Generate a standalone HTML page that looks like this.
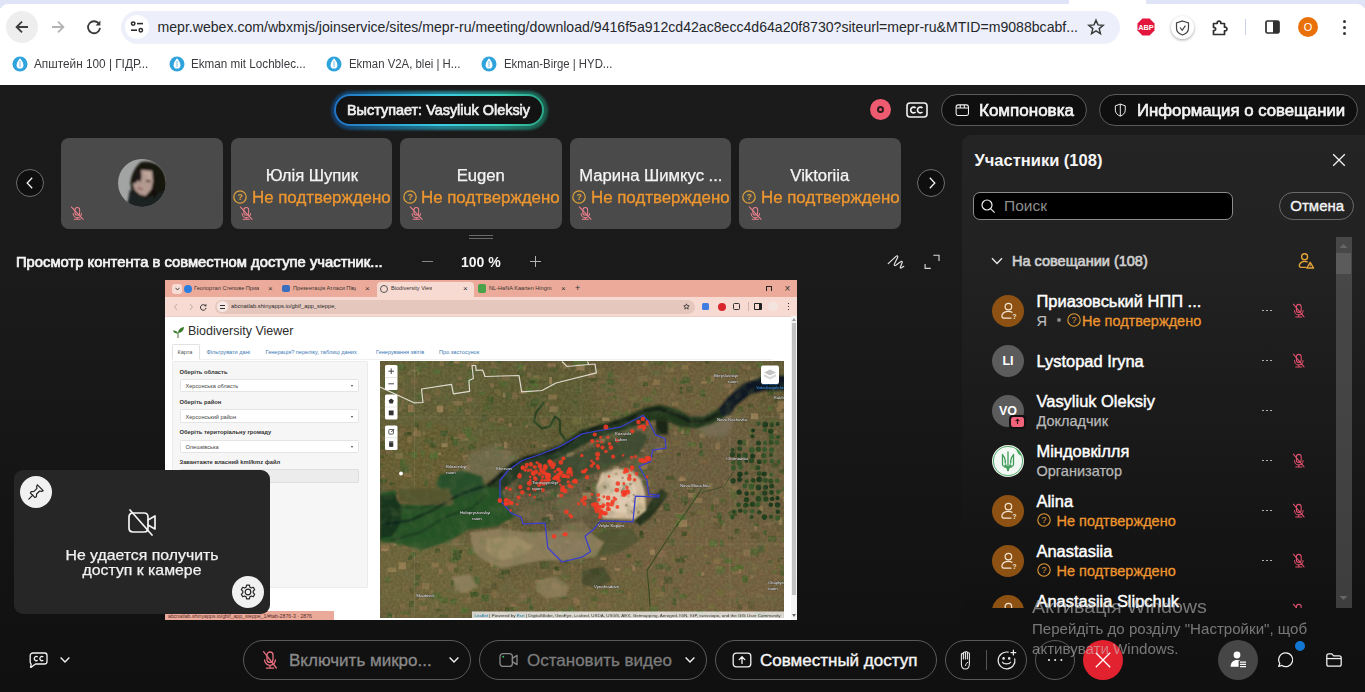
<!DOCTYPE html>
<html>
<head>
<meta charset="utf-8">
<title>Webex</title>
<style>
*{box-sizing:border-box;margin:0;padding:0}
html,body{width:1365px;height:692px;overflow:hidden;background:#111;font-family:"Liberation Sans",sans-serif;}
.abs{position:absolute}
#root{position:relative;width:1365px;height:692px;overflow:hidden;background:linear-gradient(180deg,#1b1b1b 85px,#1a1a1a 300px,#111 640px,#101010 692px)}
/* browser chrome */
#chrome{position:absolute;left:0;top:0;width:1365px;height:85px;background:#fff}
#tabstrip{position:absolute;left:0;top:0;width:1365px;height:8px;background:#dfe4f6}
#toolbar{position:absolute;left:0;top:4px;width:1365px;height:44px;background:#fff;border-radius:8px 8px 0 0}
#urlbar{position:absolute;left:120.500px;top:10.500px;width:999px;height:33px;border-radius:17px;background:#edf0fa}
#urltext{position:absolute;left:157.500px;top:18.500px;font-size:14.100px;color:#25272b;white-space:nowrap;letter-spacing:0px}
.bm{position:absolute;top:57px;font-size:12px;line-height:14px;color:#3a3c40;white-space:nowrap;transform-origin:0 50%}
/* webex */
.pill{position:absolute;border:1px solid #555;border-radius:17px;color:#fff;white-space:nowrap}
.tile{position:absolute;top:139px;height:90px;background:#4a4a4a;border-radius:8px;color:#fff;overflow:hidden}
.tile .nm{position:absolute;left:0;right:0;top:29px;-webkit-text-stroke:0.25px #f4f4f4;text-align:center;font-size:16px;line-height:18px;transform:scaleX(1.04);color:#f4f4f4;white-space:nowrap}
.tile .st{position:absolute;left:21.300px;top:51px;font-size:16px;line-height:18px;color:#ee962f;white-space:nowrap;-webkit-text-stroke:0.3px #ee962f;transform:scaleX(1.054);transform-origin:0 50%}
#panel{position:absolute;left:962px;top:135px;width:403px;height:560px;background:linear-gradient(180deg,#242424 0px,#222 120px,#181818 330px,#111 470px,#101010 560px);border-radius:9px 0 0 0}
.row{position:absolute;left:0;width:380px;height:50px}
.row .av{position:absolute;left:30px;top:9px;width:32px;height:32px;border-radius:16px;background:#8d5213}
.row .n1{position:absolute;left:74.500px;top:5px;font-size:16.450px;line-height:20px;color:#fff;white-space:nowrap;-webkit-text-stroke:0.45px #fff}
.row .n2{position:absolute;left:74.500px;top:25px;font-size:14.500px;line-height:20px;color:#ee962f;white-space:nowrap;-webkit-text-stroke:0.3px #ee962f}
.row .dots{position:absolute;left:299px;top:24px;width:12px;height:2px}
.row .dots i{position:absolute;top:0;width:1.800px;height:1.800px;background:#c4c4c4;border-radius:1px}

.ft{font-size:5.600px;line-height:7px;color:#3a3330;white-space:nowrap;overflow:hidden}
.fx{font-size:8px;line-height:9px;color:#333}
.nt{top:67.500px;font-size:5.600px;line-height:8px;color:#3b78b4;white-space:nowrap}
.fl{font-size:5.800px;line-height:8px;font-weight:bold;color:#333;white-space:nowrap}
.sel{left:14.500px;width:179px;height:13.500px;background:#fff;border:0.800px solid #e4e4e4;border-radius:1.500px}
.sel span{position:absolute;left:5px;top:2.500px;font-size:5.600px;line-height:8px;color:#444;white-space:nowrap}
.sel i{position:absolute;right:5px;top:5.500px;width:0;height:0;border-left:1.600px solid transparent;border-right:1.600px solid transparent;border-top:2px solid #444}
</style>
</head>
<body>
<div id="root">

<!-- ============ BROWSER CHROME ============ -->
<div id="chrome">
  <div id="tabstrip"></div>
  <div id="toolbar"></div>
  <div class="abs" style="left:1069px;top:0;width:77px;height:8px;background:#fff;border-radius:0"></div>
  <!-- back -->
  <div class="abs" style="left:6px;top:11px;width:32px;height:32px;border-radius:16px;background:#eeeeee"></div>
  <svg class="abs" style="left:14px;top:19px" width="16" height="16" viewBox="0 0 16 16"><path d="M14 8H3M8 2.6L2.6 8L8 13.4" fill="none" stroke="#3c3c3c" stroke-width="1.8" stroke-linecap="butt" stroke-linejoin="miter"/></svg>
  <!-- forward -->
  <svg class="abs" style="left:50px;top:19px" width="16" height="16" viewBox="0 0 16 16"><path d="M2 8H13M8 2.6L13.4 8L8 13.4" fill="none" stroke="#b4b4b4" stroke-width="1.8"/></svg>
  <!-- reload -->
  <svg class="abs" style="left:85px;top:18px" width="18" height="18" viewBox="0 0 18 18"><path d="M14.2 6.2A6 6 0 1 0 15 9.8" fill="none" stroke="#3c3c3c" stroke-width="1.8"/><path d="M15.4 2.6V7.4H10.6Z" fill="#3c3c3c"/></svg>
  <div id="urlbar"></div>
  <div class="abs" style="left:125px;top:15px;width:24px;height:24px;border-radius:12px;background:#fff"></div>
  <svg class="abs" style="left:130px;top:20px" width="14" height="14" viewBox="0 0 14 14"><circle cx="3.2" cy="3.6" r="1.7" fill="none" stroke="#2b2b2b" stroke-width="1.5"/><path d="M7 3.6H13" stroke="#2b2b2b" stroke-width="1.6"/><circle cx="10.8" cy="10.2" r="1.7" fill="none" stroke="#2b2b2b" stroke-width="1.5"/><path d="M1 10.2H7" stroke="#2b2b2b" stroke-width="1.6"/></svg>
  <div id="urltext">mepr.webex.com/wbxmjs/joinservice/sites/mepr-ru/meeting/download/9416f5a912cd42ac8ecc4d64a20f8730?siteurl=mepr-ru&amp;MTID=m9088bcabf...</div>
  <!-- star -->
  <svg class="abs" style="left:1087px;top:18px" width="18" height="18" viewBox="0 0 18 18"><path d="M9 2.2L11 6.9L16.1 7.3L12.2 10.6L13.4 15.6L9 12.9L4.6 15.6L5.8 10.6L1.9 7.3L7 6.9Z" fill="none" stroke="#3c3c3c" stroke-width="1.5" stroke-linejoin="miter"/></svg>
  <!-- ABP -->
  <svg class="abs" style="left:1137px;top:18px" width="18" height="18" viewBox="0 0 18 18"><path d="M5.4 0.5H12.6L17.5 5.4V12.6L12.6 17.5H5.4L0.5 12.6V5.4Z" fill="#e3173d"/><text x="9" y="12" font-family="Liberation Sans" font-weight="bold" font-size="7.4" fill="#fff" text-anchor="middle">ABP</text></svg>
  <!-- shield -->
  <div class="abs" style="left:1171px;top:16px;width:23px;height:23px;border-radius:12px;background:#fff;box-shadow:0 1px 3px rgba(0,0,0,.35)"></div>
  <svg class="abs" style="left:1175px;top:20px" width="15" height="16" viewBox="0 0 15 16"><path d="M7.5 1L13.5 3V8C13.5 11.5 10.5 14 7.5 15C4.500 14 1.5 11.5 1.5 8V3Z" fill="none" stroke="#444" stroke-width="1.2"/><path d="M5 7.5L7.2 10.3L10.4 5.6" fill="none" stroke="#444" stroke-width="1.2"/></svg>
  <!-- puzzle -->
  <svg class="abs" style="left:1210px;top:17px" width="20" height="20" viewBox="0 0 20 20"><path d="M3.500 6.500H7.2C6.600 3.2 11.4 3.2 10.8 6.500H14.500V10.200C17.8 9.600 17.8 14.400 14.500 13.800V17.500H3.500V13.600C6.400 13.900 6.400 10.100 3.500 10.400Z" fill="none" stroke="#2f2f2f" stroke-width="1.7" stroke-linejoin="round"/></svg>
  <div class="abs" style="left:1245px;top:19px;width:1px;height:16px;background:#c9d1e6"></div>
  <!-- side panel -->
  <svg class="abs" style="left:1265px;top:20px" width="15" height="14" viewBox="0 0 15 14"><rect x="1" y="1" width="13" height="12" rx="1.500" fill="none" stroke="#2f2f2f" stroke-width="1.700"/><rect x="8" y="1" width="6" height="12" fill="#2f2f2f"/></svg>
  <!-- profile -->
  <div class="abs" style="left:1298px;top:17px;width:20px;height:20px;border-radius:10px;background:#e8710a;color:#fff;font-size:11px;text-align:center;line-height:20px">O</div>
  <!-- menu -->
  <div class="abs" style="left:1343px;top:20px;width:3px;height:3px;border-radius:2px;background:#333"></div>
  <div class="abs" style="left:1343px;top:26px;width:3px;height:3px;border-radius:2px;background:#333"></div>
  <div class="abs" style="left:1343px;top:32px;width:3px;height:3px;border-radius:2px;background:#333"></div>
  <!-- bookmarks -->
  <svg class="abs" style="left:12px;top:56px" width="16" height="16" viewBox="0 0 16 16"><circle cx="8" cy="8" r="7.5" fill="#2ea3dc"/><path d="M8 2.200C5.200 5.400 4.600 7.600 4.600 9.200A3.400 3.400 0 0 0 11.400 9.200C11.400 7.600 10.800 5.400 8 2.200Z" fill="#fff"/><path d="M8 5V11" stroke="#9fd3ee" stroke-width="1.4"/></svg> <svg class="abs" style="left:169px;top:56px" width="16" height="16" viewBox="0 0 16 16"><circle cx="8" cy="8" r="7.5" fill="#2ea3dc"/><path d="M8 2.200C5.200 5.400 4.600 7.600 4.600 9.200A3.400 3.400 0 0 0 11.400 9.200C11.400 7.600 10.800 5.400 8 2.200Z" fill="#fff"/><path d="M8 5V11" stroke="#9fd3ee" stroke-width="1.4"/></svg> <svg class="abs" style="left:326px;top:56px" width="16" height="16" viewBox="0 0 16 16"><circle cx="8" cy="8" r="7.5" fill="#2ea3dc"/><path d="M8 2.200C5.200 5.400 4.600 7.600 4.600 9.200A3.400 3.400 0 0 0 11.400 9.200C11.400 7.600 10.800 5.400 8 2.200Z" fill="#fff"/><path d="M8 5V11" stroke="#9fd3ee" stroke-width="1.4"/></svg> <svg class="abs" style="left:481px;top:56px" width="16" height="16" viewBox="0 0 16 16"><circle cx="8" cy="8" r="7.5" fill="#2ea3dc"/><path d="M8 2.200C5.200 5.400 4.600 7.600 4.600 9.200A3.400 3.400 0 0 0 11.400 9.200C11.400 7.600 10.800 5.400 8 2.200Z" fill="#fff"/><path d="M8 5V11" stroke="#9fd3ee" stroke-width="1.4"/></svg>
  <div class="bm" style="left:34.400px;transform:scaleX(.983)">Апштейн 100 | ГІДР...</div>
  <div class="bm" style="left:191.300px;transform:scaleX(.972)">Ekman mit Lochblec...</div>
  <div class="bm" style="left:348.700px;transform:scaleX(.95)">Ekman V2A, blei | H...</div>
  <div class="bm" style="left:503.600px;transform:scaleX(.946)">Ekman-Birge | HYD...</div>
</div>

<!-- ============ WEBEX TOP BAR ============ -->
<div id="topbar">
  <!-- speaker pill -->
  <div class="abs" style="left:330.500px;top:90.500px;width:217px;height:39px;border-radius:20px;background:linear-gradient(90deg,#123f70 0%,#1a6e9c 25%,#2597ad 52%,#259c8e 78%,#196a55 100%);filter:blur(0.9px);opacity:.8"></div>
  <div class="abs" style="left:334px;top:94px;width:210px;height:32px;border-radius:16px;background:linear-gradient(90deg,#2371c2 0%,#2a9ed0 25%,#3ccbe0 52%,#3bd0ba 78%,#2ba585 100%)"></div>
  <div class="abs" style="left:335.600px;top:95.600px;width:206.800px;height:28.800px;border-radius:14.400px;background:#131313"></div>
  <div id="spk" class="abs" style="left:347px;top:101px;font-size:15px;color:#efefef;white-space:nowrap;line-height:18px;-webkit-text-stroke:0.7px #efefef;transform:scaleX(.961);transform-origin:0 50%">Выступает: Vasyliuk Oleksiy</div>
  <!-- record -->
  <div class="abs" style="left:870px;top:99px;width:21px;height:21px;border-radius:11px;background:#ee5b71"></div>
  <div class="abs" style="left:877px;top:106px;width:7px;height:7px;border-radius:4px;border:2px solid #2a1a1c"></div>
  <!-- cc -->
  <svg class="abs" style="left:906px;top:102px" width="22" height="16" viewBox="0 0 22 16"><rect x="1" y="1" width="20" height="14" rx="3" fill="none" stroke="#f2f2f2" stroke-width="1.600"/><path d="M9.700 6A2.900 2.900 0 1 0 9.700 10M16.500 6A2.900 2.900 0 1 0 16.500 10" fill="none" stroke="#f2f2f2" stroke-width="1.600"/></svg>
  <!-- layout pill -->
  <div class="pill" style="left:941px;top:94px;width:146px;height:32px;border-radius:16px;background:#0f0f0f;border-color:#5a5a5a"></div>
  <svg class="abs" style="left:954.700px;top:103.600px" width="14.600" height="12.400" viewBox="0 0 16 14"><rect x="1" y="1" width="14" height="12" rx="2.400" fill="none" stroke="#f2f2f2" stroke-width="1.200"/><path d="M1 4.600H15M5.700 1V4.600M10.300 1V4.600" stroke="#f2f2f2" stroke-width="1.200"/></svg>
  <div id="lay" class="abs" style="left:978.700px;transform:scaleX(1.031);transform-origin:0 50%;top:100px;font-size:16.500px;color:#f4f4f4;white-space:nowrap;line-height:20px;-webkit-text-stroke:0.65px #f4f4f4">Компоновка</div>
  <!-- info pill -->
  <div class="pill" style="left:1099px;top:94px;width:259px;height:32px;border-radius:16px;background:#0f0f0f;border-color:#5a5a5a"></div>
  <svg class="abs" style="left:1113.700px;top:103.200px" width="12.600" height="14.200" viewBox="0 0 14 16"><path d="M7 1.200L12.600 3.200V8C12.600 11.400 10 13.700 7 14.800C4 13.700 1.400 11.400 1.400 8V3.200Z" fill="none" stroke="#f2f2f2" stroke-width="1.100"/><path d="M7 1.200V14.800" stroke="#f2f2f2" stroke-width="1.100"/></svg>
  <div id="inf" class="abs" style="left:1136.500px;transform:scaleX(1.015);transform-origin:0 50%;top:100px;font-size:16.500px;color:#f4f4f4;white-space:nowrap;line-height:20px;-webkit-text-stroke:0.65px #f4f4f4">Информация о совещании</div>
</div>

<!-- ============ FILMSTRIP ============ -->
<div id="film">
  <div class="abs" style="left:16px;top:169px;width:28px;height:28px;border-radius:14px;border:1px solid #6e6e6e;background:#0f0f0f"></div>
  <svg class="abs" style="left:24px;top:176px" width="12" height="14" viewBox="0 0 12 14"><path d="M8.200 1.800L3.200 7L8.200 12.200" fill="none" stroke="#f2f2f2" stroke-width="1.300"/></svg>
  <div class="abs" style="left:917px;top:169px;width:28px;height:28px;border-radius:14px;border:1px solid #6e6e6e;background:#0f0f0f"></div>
  <svg class="abs" style="left:926px;top:176px" width="12" height="14" viewBox="0 0 12 14"><path d="M3.800 1.800L8.800 7L3.800 12.200" fill="none" stroke="#f2f2f2" stroke-width="1.300"/></svg>
  <div class="tile" style="left:61px;width:161.600px;top:138px;height:91px"><svg class="abs" style="left:57px;top:21px" width="48" height="48" viewBox="0 0 48 48"><defs><clipPath id="avc"><circle cx="24" cy="24" r="24"/></clipPath><filter id="avb" x="-20%" y="-20%" width="140%" height="140%"><feGaussianBlur stdDeviation="0.9"/></filter></defs><g clip-path="url(#avc)"><rect width="48" height="48" fill="#a2a4a3"/><g filter="url(#avb)"><path d="M23 3C30 1 40 4 44 10C49 16 50 30 48 40L40 48H20L14 36L12.500 24C13 16 17 8 23 3Z" fill="#17120f"/><path d="M22.500 11L34.200 11.800L35 22.700L33.400 30.300L27.500 37L21.700 35.400L16.700 31.100L15 25.300L19.200 20.200L21.700 14.300Z" fill="#b39a90"/><path d="M25 12C29 11 33 12 34 16L33 24L30 20Z" fill="#bfa59b"/><path d="M18.500 10L23 11L23.500 17L22.800 23L20 21L18 24L15.500 24Z" fill="#1d1613"/><path d="M28 21.800L32.500 22.400" stroke="#2e1c1a" stroke-width="1.600"/><path d="M20.500 21.500L23 22" stroke="#4a3230" stroke-width="1.200"/><path d="M19.500 29.800C21 29.200 23 29.600 24.500 30.800" stroke="#8a5856" stroke-width="1.700" fill="none"/><path d="M22 24L21 27.500" stroke="#a88880" stroke-width="1"/><path d="M11.700 31L20 36L28 40L40 34L50 30V50H6L10 42Z" fill="#1b2220"/><path d="M34 30L40 34L36 40Z" fill="#130f0d"/></g></g></svg><svg class="abs" style="left:9px;top:68.200px" width="14.600" height="14.600" viewBox="0 0 16 16" fill="none" stroke="#f2838f" stroke-width="1.1" stroke-linecap="round"><rect x="5.400" y="1.600" width="5.200" height="8.400" rx="2.600"/><path d="M3.400 8.200A4.600 4.600 0 0 0 12.600 8.200M8 12.800V14.600M4.600 14.600H11.400M1.400 1L14.400 14.600"/></svg></div>
  <div class="tile" style="left:230.6px;width:161.600px;top:138px;height:91px"><div class="nm" id="tn1">Юлія Шупик</div><div class="st" id="ts1">Не подтверждено</div><svg class="abs" style="left:2.400px;top:52.300px" width="14" height="14" viewBox="0 0 14 14"><circle cx="7" cy="7" r="6.200" fill="none" stroke="#dea23a" stroke-width="1.250"/><text x="7" y="10.100" font-family="Liberation Sans" font-weight="bold" font-size="8.600" fill="#dea23a" text-anchor="middle">?</text></svg><svg class="abs" style="left:8.500px;top:68.200px" width="14.600" height="14.600" viewBox="0 0 16 16" fill="none" stroke="#f2838f" stroke-width="1.1" stroke-linecap="round"><rect x="5.400" y="1.600" width="5.200" height="8.400" rx="2.600"/><path d="M3.400 8.200A4.600 4.600 0 0 0 12.600 8.200M8 12.800V14.600M4.600 14.600H11.400M1.400 1L14.400 14.600"/></svg></div>
  <div class="tile" style="left:400.2px;width:161.600px;top:138px;height:91px"><div class="nm" id="tn2">Eugen</div><div class="st" id="ts2">Не подтверждено</div><svg class="abs" style="left:2.400px;top:52.300px" width="14" height="14" viewBox="0 0 14 14"><circle cx="7" cy="7" r="6.200" fill="none" stroke="#dea23a" stroke-width="1.250"/><text x="7" y="10.100" font-family="Liberation Sans" font-weight="bold" font-size="8.600" fill="#dea23a" text-anchor="middle">?</text></svg><svg class="abs" style="left:8.500px;top:68.200px" width="14.600" height="14.600" viewBox="0 0 16 16" fill="none" stroke="#f2838f" stroke-width="1.1" stroke-linecap="round"><rect x="5.400" y="1.600" width="5.200" height="8.400" rx="2.600"/><path d="M3.400 8.200A4.600 4.600 0 0 0 12.600 8.200M8 12.800V14.600M4.600 14.600H11.400M1.400 1L14.400 14.600"/></svg></div>
  <div class="tile" style="left:569.8px;width:161.600px;top:138px;height:91px"><div class="nm" id="tn3">Марина Шимкус ...</div><div class="st" id="ts3">Не подтверждено</div><svg class="abs" style="left:2.400px;top:52.300px" width="14" height="14" viewBox="0 0 14 14"><circle cx="7" cy="7" r="6.200" fill="none" stroke="#dea23a" stroke-width="1.250"/><text x="7" y="10.100" font-family="Liberation Sans" font-weight="bold" font-size="8.600" fill="#dea23a" text-anchor="middle">?</text></svg><svg class="abs" style="left:8.500px;top:68.200px" width="14.600" height="14.600" viewBox="0 0 16 16" fill="none" stroke="#f2838f" stroke-width="1.1" stroke-linecap="round"><rect x="5.400" y="1.600" width="5.200" height="8.400" rx="2.600"/><path d="M3.400 8.200A4.600 4.600 0 0 0 12.600 8.200M8 12.800V14.600M4.600 14.600H11.400M1.400 1L14.400 14.600"/></svg></div>
  <div class="tile" style="left:739.4px;width:161.600px;top:138px;height:91px"><div class="nm" id="tn4">Viktoriia</div><div class="st" id="ts4">Не подтверждено</div><svg class="abs" style="left:2.400px;top:52.300px" width="14" height="14" viewBox="0 0 14 14"><circle cx="7" cy="7" r="6.200" fill="none" stroke="#dea23a" stroke-width="1.250"/><text x="7" y="10.100" font-family="Liberation Sans" font-weight="bold" font-size="8.600" fill="#dea23a" text-anchor="middle">?</text></svg><svg class="abs" style="left:8.500px;top:68.200px" width="14.600" height="14.600" viewBox="0 0 16 16" fill="none" stroke="#f2838f" stroke-width="1.1" stroke-linecap="round"><rect x="5.400" y="1.600" width="5.200" height="8.400" rx="2.600"/><path d="M3.400 8.200A4.600 4.600 0 0 0 12.600 8.200M8 12.800V14.600M4.600 14.600H11.400M1.400 1L14.400 14.600"/></svg></div>
</div>

<!-- ============ SHARE ============ -->
<div id="share">
  <!-- header -->
  <div id="shtitle" class="abs" style="left:16px;top:253px;font-size:14.500px;color:#f4f4f4;-webkit-text-stroke:0.7px #f4f4f4;white-space:nowrap;line-height:18px;transform:scaleX(1.019);transform-origin:0 50%">Просмотр контента в совместном доступе участник...</div>
  <div class="abs" style="left:469px;top:235px;width:24px;height:1px;background:#6a6a6a"></div>
  <div class="abs" style="left:469px;top:238px;width:24px;height:1px;background:#6a6a6a"></div>
  <div class="abs" style="left:421.500px;top:261.200px;width:11px;height:1.200px;background:#858585"></div>
  <div id="pct" class="abs" style="left:460.700px;transform:scaleX(.968);transform-origin:0 50%;top:253px;font-size:14.500px;font-weight:bold;color:#f4f4f4;white-space:nowrap;line-height:18px">100 %</div>
  <div class="abs" style="left:529.500px;top:261.200px;width:11px;height:1.100px;background:#b4b4b4"></div>
  <div class="abs" style="left:534.500px;top:256.200px;width:1.100px;height:11px;background:#b4b4b4"></div>
  <svg class="abs" style="left:887px;top:254px" width="18" height="18" viewBox="0 0 18 18"><path d="M1.200 9.700L9 2.400C10.400 1.200 11.200 2 10.600 3.600L7.400 10C6.800 11.400 7.600 12 8.800 11.200L13.600 7.800C15 6.800 15.600 7.600 15 9L13.400 13C13 14.200 13.600 14.400 14.600 13.800L16.800 12.300" fill="none" stroke="#e6e6e6" stroke-width="1.150" stroke-linecap="round" stroke-linejoin="round"/></svg>
  <svg class="abs" style="left:924px;top:253px" width="18" height="18" viewBox="0 0 18 18" fill="none" stroke="#d8d8d8" stroke-width="1.150"><path d="M9.300 2.200H15V7.900"/><path d="M1.100 11V15.300H6.800"/></svg>

  <div id="shc" class="abs" style="left:165px;top:280px;width:632px;height:340px;background:#fff;overflow:hidden">
    <!-- tab strip -->
    <div class="abs" style="left:0;top:0;width:632px;height:17px;background:#ecab9a"></div>
    <div class="abs" style="left:0;top:17px;width:632px;height:19px;background:#f7dbd3"></div>
    <div class="abs" style="left:212px;top:2px;width:97px;height:15px;border-radius:4px 4px 0 0;background:#f7dbd3"></div>
    <div class="abs" style="left:7px;top:4px;width:10px;height:10px;border-radius:3px;background:#f6dcd5"></div>
    <svg class="abs" style="left:9.500px;top:7px" width="5" height="4" viewBox="0 0 5 4"><path d="M0.500 0.800L2.500 3L4.500 0.800" fill="none" stroke="#333" stroke-width="0.900"/></svg>
    <!-- tabs -->
    <div class="abs" style="left:19px;top:4.500px;width:8px;height:8px;border-radius:4px;background:#2b7de0"></div>
    <div class="abs ft" style="left:29px;top:5px;width:65px">Геопортал Степове Приазовʼя</div>
    <div class="abs fx" style="left:103px;top:4px">×</div>
    <div class="abs" style="left:117px;top:5px;width:8px;height:7px;border-radius:2px;background:#3a6fc0"></div>
    <div class="abs ft" style="left:128px;top:5px;width:63px">Презентація Атласи Півдня</div>
    <div class="abs fx" style="left:200px;top:4px">×</div>
    <div class="abs" style="left:215px;top:4.500px;width:8px;height:8px;border-radius:4px;border:1.500px solid #555"></div>
    <div class="abs ft" style="left:226px;top:5px;width:41px">Biodiversity Viewer</div>
    <div class="abs fx" style="left:298px;top:4px">×</div>
    <div class="abs" style="left:313px;top:4px;width:8px;height:9px;border-radius:2px;background:#4aa348"></div>
    <div class="abs ft" style="left:324px;top:5px;width:63px">NL-HaNA Kaarten Hingman</div>
    <div class="abs fx" style="left:396px;top:4px">×</div>
    <div class="abs fx" style="left:410px;top:3.500px;font-size:9px">+</div>
    <div class="abs" style="left:601px;top:6px;width:5.500px;height:5px;border:1px solid #222;border-bottom:none"></div>
    <div class="abs fx" style="left:619.500px;top:3.500px;font-size:10px">×</div>
    <!-- toolbar -->
    <div class="abs" style="left:50px;top:19.500px;width:480px;height:14px;border-radius:7px;background:#e6c7be"></div>
    <div class="abs" style="left:52px;top:21px;width:11px;height:11px;border-radius:6px;background:#f7e7e2"></div>
    <div class="abs" style="left:55px;top:24.500px;width:5px;height:1.200px;background:#333"></div><div class="abs" style="left:55px;top:27.500px;width:5px;height:1.200px;background:#333"></div>
    <div class="abs ft" style="left:66px;top:22.500px;width:105px;color:#2a2a2a;font-size:5.800px">abcnatlab.shinyapps.io/gbif_app_steppe_1/</div>
    <svg class="abs" style="left:8px;top:23px" width="34" height="8" viewBox="0 0 34 8" fill="none"><path d="M4 1L1.500 4L4 7" stroke="#b9a7a2" stroke-width="0.900"/><path d="M17 1L19.500 4L17 7" stroke="#b9a7a2" stroke-width="0.900"/><path d="M32.500 2.800A2.800 2.800 0 1 0 33 5" stroke="#333" stroke-width="1"/><path d="M33.400 0.800V3.200H31Z" fill="#333"/></svg>
    <svg class="abs" style="left:518px;top:23px" width="7" height="7" viewBox="0 0 18 18"><path d="M9 2.200L11 6.900L16.100 7.300L12.200 10.600L13.400 15.600L9 12.900L4.600 15.600L5.800 10.600L1.900 7.300L7 6.900Z" fill="none" stroke="#3c3c3c" stroke-width="2.200"/></svg>
    <div class="abs" style="left:537px;top:23px;width:7px;height:7px;border-radius:1.500px;background:#3f7de0"></div>
    <div class="abs" style="left:552.500px;top:22.500px;width:8px;height:8px;border-radius:4px;background:#d8262c"></div>
    <div class="abs" style="left:568px;top:23px;width:7px;height:7px;border-radius:1.500px;border:1.300px solid #333"></div>
    <div class="abs" style="left:583px;top:22px;width:0.800px;height:9px;background:#d0b3ab"></div>
    <div class="abs" style="left:589px;top:22.500px;width:7.500px;height:7.500px;border-radius:1px;border:1.200px solid #222;border-right-width:3.500px"></div>
    <div class="abs" style="left:603px;top:22px;width:10px;height:9px;border-radius:4.500px;background:#f3e4df"></div>
    <div class="abs" style="left:622.500px;top:22.500px;width:1.400px;height:1.400px;background:#333;box-shadow:0 3px 0 #333,0 6px 0 #333"></div>
    <div class="abs" style="left:0;top:35.500px;width:632px;height:0.800px;background:#ecd0c8"></div>
    <!-- page -->
    <svg class="abs" style="left:7px;top:45px" width="13" height="14" viewBox="0 0 13 14"><path d="M6 13V7.500" stroke="#4a6a38" stroke-width="1"/><path d="M6 8C6 5 8.500 2.500 12 2C11.800 5.500 9.500 7.800 6 8Z" fill="#3c7a2e"/><path d="M6 8.500C5.500 6.500 3.500 5.300 1 5.500C1.500 7.600 3.500 8.800 6 8.500Z" fill="#3c7a2e"/></svg>
    <div id="bv" class="abs" style="left:23px;top:44.200px;font-size:12.500px;color:#2c2c2c;white-space:nowrap;line-height:15px">Biodiversity Viewer</div>
    <!-- nav tabs -->
    <div class="abs" style="left:7px;top:63.500px;width:28px;height:16px;border:0.800px solid #e2e2e2;border-bottom:none;border-radius:2px 2px 0 0;background:#fff"></div>
    <div class="abs" style="left:7px;top:79px;width:600px;height:0.800px;background:#efefef"></div>
    <div class="abs" style="left:7.800px;top:78.500px;width:26.500px;height:2px;background:#fff"></div>
    <div class="abs nt" style="left:12.500px;color:#555">Карта</div>
    <div class="abs nt" style="left:41.500px">Фільтрувати дані</div>
    <div class="abs nt" style="left:100.500px">Генерація? переліку, таблиці даних</div>
    <div class="abs nt" style="left:211px">Генерування звітів</div>
    <div class="abs nt" style="left:274px">Про застосунок</div>
    <!-- form panel -->
    <div class="abs" style="left:6.500px;top:80.500px;width:196px;height:227px;background:#f6f6f6;border:0.800px solid #ebebeb;border-radius:1.500px"></div>
    <div class="abs fl" style="left:14.500px;top:87.500px">Оберіть область</div>
    <div class="abs sel" style="top:98.500px"><span>Херсонська область</span><i></i></div>
    <div class="abs fl" style="left:14.500px;top:117.500px">Оберіть район</div>
    <div class="abs sel" style="top:129px"><span>Херсонський район</span><i></i></div>
    <div class="abs fl" style="left:14.500px;top:148.300px">Оберіть територіальну громаду</div>
    <div class="abs sel" style="top:159.500px"><span>Олешківська</span><i></i></div>
    <div class="abs fl" style="left:14.500px;top:178.300px">Завантажте власний kml/kmz файл</div>
    <div class="abs" style="left:14.500px;top:189px;width:179px;height:14px;background:#ececec;border:0.800px solid #dedede;border-radius:1.500px"></div>
    <!-- status pink -->
    <div class="abs" style="left:0;top:330.500px;width:169px;height:9.500px;background:#eaa999"></div>
    <div class="abs ft" style="left:3px;top:332.500px;width:160px;font-size:5.200px;color:#5a2e28">abcnatlab.shinyapps.io/gbif_app_steppe_1/#tab-2876-3 · 2876</div>
    <!-- page scrollbar -->
    <div class="abs" style="left:625.500px;top:36px;width:6.500px;height:304px;background:#f4f4f4"></div>
    <div class="abs" style="left:626.500px;top:43px;width:4px;height:272px;background:#c2c2c2"></div><svg class="abs" style="left:626.500px;top:38px" width="4" height="3" viewBox="0 0 4 3"><path d="M0 3L2 0L4 3Z" fill="#999"/></svg><svg class="abs" style="left:626.500px;top:334px" width="4" height="3" viewBox="0 0 4 3"><path d="M0 0L2 3L4 0Z" fill="#666"/></svg>
        <div class="abs" style="left:0;top:0;width:627px;height:17px;pointer-events:none"></div>
    <svg class="abs" style="left:215px;top:80.500px" width="404" height="257" viewBox="0 0 404 257">
<defs><filter id="b0"><feGaussianBlur stdDeviation="0.45"/></filter><filter id="b1" x="-10%" y="-10%" width="120%" height="120%"><feGaussianBlur stdDeviation="0.9"/></filter><filter id="b2" x="-10%" y="-10%" width="120%" height="120%"><feGaussianBlur stdDeviation="2.2"/></filter><filter id="b3" x="-20%" y="-20%" width="140%" height="140%"><feGaussianBlur stdDeviation="8"/></filter><filter id="nz" x="0" y="0" width="100%" height="100%"><feTurbulence type="fractalNoise" baseFrequency="0.35" numOctaves="2" seed="4" result="t"/><feColorMatrix type="matrix" values="0 0 0 0 0.35  0 0 0 0 0.30  0 0 0 0 0.15  0.9 0.6 0 0 -0.55"/></filter><filter id="nz2" x="0" y="0" width="100%" height="100%"><feTurbulence type="fractalNoise" baseFrequency="0.09" numOctaves="3" seed="9"/><feColorMatrix type="matrix" values="0 0 0 0 0.12  0 0 0 0 0.16  0 0 0 0 0.06  1.6 0 0 0 -0.7"/></filter><clipPath id="mc"><rect width="404" height="257"/></clipPath></defs>
<g clip-path="url(#mc)"><rect width="404" height="257" fill="#5f5433"/>
<g filter="url(#b3)"><ellipse cx="70" cy="40" rx="90" ry="50" fill="#5d5a31"/><ellipse cx="190" cy="45" rx="90" ry="40" fill="#59572f"/><ellipse cx="300" cy="30" rx="90" ry="30" fill="#6a5a39"/><ellipse cx="330" cy="120" rx="80" ry="70" fill="#67583a"/><ellipse cx="320" cy="210" rx="100" ry="60" fill="#6f5b3d"/><ellipse cx="200" cy="235" rx="90" ry="30" fill="#6a5d39"/><ellipse cx="50" cy="215" rx="70" ry="45" fill="#6b6039"/><ellipse cx="40" cy="100" rx="50" ry="40" fill="#62592f"/></g>
<g filter="url(#b0)"><rect x="180.6" y="142.1" width="8.5" height="4.8" fill="#55502c" opacity="0.88"/><rect x="73.5" y="205.8" width="5.6" height="5.6" fill="#3b5226" opacity="0.50"/><rect x="119.8" y="19.7" width="7.8" height="6.0" fill="#46602a" opacity="0.75"/><rect x="157.6" y="114.2" width="7.3" height="5.8" fill="#86694a" opacity="0.46"/><rect x="211.6" y="11.5" width="3.7" height="3.7" fill="#46602a" opacity="0.84"/><rect x="129.1" y="150.2" width="3.8" height="3.7" fill="#50642e" opacity="0.70"/><rect x="266.3" y="115.4" width="4.3" height="7.5" fill="#3f5a28" opacity="0.49"/><rect x="99.6" y="193.8" width="5.8" height="2.6" fill="#86694a" opacity="0.83"/><rect x="159.4" y="217.0" width="5.0" height="7.3" fill="#3f5a28" opacity="0.79"/><rect x="83.1" y="238.0" width="2.8" height="4.4" fill="#77603a" opacity="0.65"/><rect x="25.8" y="160.3" width="7.6" height="3.8" fill="#7c6241" opacity="0.61"/><rect x="2.2" y="103.0" width="8.5" height="3.2" fill="#77603a" opacity="0.50"/><rect x="20.4" y="204.0" width="3.7" height="5.3" fill="#6d6637" opacity="0.70"/><rect x="398.0" y="196.8" width="5.2" height="4.4" fill="#36481f" opacity="0.66"/><rect x="82.8" y="66.4" width="8.8" height="6.5" fill="#50642e" opacity="0.95"/><rect x="4.0" y="44.9" width="9.0" height="5.5" fill="#86694a" opacity="0.50"/><rect x="399.6" y="51.7" width="4.2" height="6.4" fill="#927650" opacity="0.87"/><rect x="153.6" y="15.4" width="3.9" height="5.7" fill="#46602a" opacity="0.75"/><rect x="147.7" y="114.3" width="8.7" height="4.9" fill="#86694a" opacity="0.52"/><rect x="153.5" y="159.7" width="4.5" height="3.6" fill="#86694a" opacity="0.57"/><rect x="73.4" y="189.0" width="8.6" height="3.5" fill="#36481f" opacity="0.89"/><rect x="242.2" y="106.0" width="3.2" height="2.7" fill="#50642e" opacity="0.57"/><rect x="283.5" y="63.1" width="7.9" height="5.5" fill="#50642e" opacity="0.71"/><rect x="375.1" y="251.0" width="3.3" height="4.9" fill="#4a6a2c" opacity="0.88"/><rect x="246.6" y="69.1" width="8.5" height="3.5" fill="#46602a" opacity="0.48"/><rect x="163.9" y="61.0" width="2.8" height="3.9" fill="#55502c" opacity="0.74"/><rect x="49.7" y="90.5" width="8.3" height="7.4" fill="#4a6a2c" opacity="0.82"/><rect x="209.0" y="243.1" width="6.3" height="7.1" fill="#6d6637" opacity="0.91"/><rect x="282.0" y="247.3" width="2.6" height="5.7" fill="#6d6637" opacity="0.48"/><rect x="122.9" y="31.7" width="3.0" height="4.8" fill="#927650" opacity="0.82"/><rect x="363.3" y="188.4" width="7.1" height="6.5" fill="#927650" opacity="0.63"/><rect x="275.5" y="231.1" width="8.2" height="4.6" fill="#a08258" opacity="0.47"/><rect x="200.0" y="-0.2" width="6.8" height="4.4" fill="#46602a" opacity="0.75"/><rect x="28.7" y="162.9" width="9.0" height="6.9" fill="#77603a" opacity="0.62"/><rect x="377.2" y="177.2" width="5.5" height="4.8" fill="#55502c" opacity="0.49"/><rect x="302.1" y="3.8" width="6.4" height="4.9" fill="#8a7048" opacity="0.93"/><rect x="42.1" y="199.6" width="6.8" height="4.9" fill="#46602a" opacity="0.63"/><rect x="54.4" y="155.7" width="5.9" height="6.3" fill="#927650" opacity="0.78"/><rect x="176.3" y="228.7" width="4.6" height="5.8" fill="#8a7048" opacity="0.77"/><rect x="323.9" y="193.0" width="3.8" height="3.6" fill="#8a7048" opacity="0.74"/><rect x="125.1" y="31.5" width="5.7" height="6.7" fill="#3f5a28" opacity="0.47"/><rect x="22.2" y="251.9" width="7.8" height="3.1" fill="#6d6637" opacity="0.59"/><rect x="83.3" y="104.1" width="6.6" height="5.0" fill="#927650" opacity="0.81"/><rect x="339.5" y="159.1" width="4.6" height="6.6" fill="#50642e" opacity="0.89"/><rect x="12.9" y="181.0" width="6.2" height="4.0" fill="#a08258" opacity="0.73"/><rect x="257.5" y="101.8" width="3.7" height="6.3" fill="#50642e" opacity="0.57"/><rect x="53.5" y="8.3" width="6.6" height="4.7" fill="#4a6a2c" opacity="0.72"/><rect x="257.1" y="92.2" width="3.0" height="3.5" fill="#3f5a28" opacity="0.69"/><rect x="68.9" y="-1.2" width="5.6" height="6.1" fill="#3b5226" opacity="0.56"/><rect x="313.7" y="136.9" width="8.7" height="5.0" fill="#a08258" opacity="0.53"/><rect x="342.3" y="178.6" width="4.0" height="4.6" fill="#77603a" opacity="0.64"/><rect x="179.8" y="47.4" width="8.3" height="2.5" fill="#55502c" opacity="0.73"/><rect x="354.8" y="204.0" width="8.6" height="4.8" fill="#4a6a2c" opacity="0.94"/><rect x="36.4" y="222.1" width="7.7" height="7.1" fill="#7c6241" opacity="0.56"/><rect x="363.2" y="251.9" width="8.9" height="5.2" fill="#a08258" opacity="0.92"/><rect x="102.8" y="183.5" width="2.6" height="5.0" fill="#46602a" opacity="0.67"/><rect x="220.5" y="196.5" width="5.7" height="2.6" fill="#a08258" opacity="0.88"/><rect x="171.0" y="5.2" width="6.0" height="5.9" fill="#3b5226" opacity="0.69"/><rect x="403.9" y="231.0" width="5.9" height="5.9" fill="#6d6637" opacity="0.92"/><rect x="197.0" y="243.7" width="3.1" height="3.6" fill="#55502c" opacity="0.73"/><rect x="335.1" y="142.6" width="3.6" height="5.1" fill="#55502c" opacity="0.58"/><rect x="269.9" y="245.2" width="8.2" height="5.5" fill="#50642e" opacity="0.88"/><rect x="391.1" y="132.8" width="6.2" height="3.5" fill="#55502c" opacity="0.51"/><rect x="-2.0" y="94.4" width="6.0" height="2.7" fill="#36481f" opacity="0.72"/><rect x="399.7" y="27.8" width="3.1" height="3.3" fill="#55502c" opacity="0.68"/><rect x="371.7" y="204.9" width="5.1" height="3.7" fill="#6d6637" opacity="0.51"/><rect x="172.9" y="208.9" width="8.4" height="4.9" fill="#927650" opacity="0.50"/><rect x="167.2" y="3.7" width="4.2" height="6.0" fill="#46602a" opacity="0.47"/><rect x="59.5" y="-0.9" width="4.3" height="6.1" fill="#8a7048" opacity="0.76"/><rect x="38.8" y="186.8" width="3.3" height="5.1" fill="#50642e" opacity="0.81"/><rect x="282.2" y="225.3" width="2.7" height="5.7" fill="#3f5a28" opacity="0.71"/><rect x="61.2" y="49.3" width="6.6" height="5.7" fill="#55502c" opacity="0.56"/><rect x="217.5" y="149.1" width="3.4" height="7.1" fill="#4a6a2c" opacity="0.86"/><rect x="364.3" y="78.4" width="4.5" height="7.1" fill="#8a7048" opacity="0.84"/><rect x="75.4" y="21.3" width="8.3" height="3.2" fill="#7c6241" opacity="0.58"/><rect x="35.6" y="213.2" width="5.2" height="6.4" fill="#3b5226" opacity="0.55"/><rect x="252.2" y="204.5" width="3.1" height="5.3" fill="#927650" opacity="0.91"/><rect x="391.1" y="26.1" width="5.8" height="6.3" fill="#55502c" opacity="0.95"/><rect x="335.8" y="205.5" width="5.6" height="2.6" fill="#a08258" opacity="0.73"/><rect x="206.0" y="144.4" width="3.5" height="3.4" fill="#8a7048" opacity="0.54"/><rect x="60.5" y="69.9" width="6.9" height="5.4" fill="#3b5226" opacity="0.93"/><rect x="184.5" y="195.6" width="4.6" height="4.8" fill="#55502c" opacity="0.63"/><rect x="81.7" y="93.4" width="6.6" height="2.7" fill="#8a7048" opacity="0.54"/><rect x="181.2" y="189.0" width="5.1" height="3.5" fill="#3b5226" opacity="0.50"/><rect x="319.3" y="80.5" width="3.1" height="6.7" fill="#3f5a28" opacity="0.90"/><rect x="379.4" y="144.7" width="3.7" height="5.4" fill="#927650" opacity="0.85"/><rect x="101.4" y="233.8" width="7.3" height="6.4" fill="#3f5a28" opacity="0.92"/><rect x="50.4" y="82.1" width="6.0" height="4.3" fill="#36481f" opacity="0.83"/><rect x="161.5" y="184.6" width="3.0" height="4.2" fill="#6d6637" opacity="0.50"/><rect x="358.3" y="254.5" width="8.4" height="2.7" fill="#50642e" opacity="0.92"/><rect x="267.8" y="84.2" width="6.8" height="5.3" fill="#55502c" opacity="0.49"/><rect x="206.0" y="125.9" width="3.9" height="3.1" fill="#36481f" opacity="0.94"/><rect x="5.3" y="156.6" width="7.3" height="3.8" fill="#36481f" opacity="0.70"/><rect x="306.6" y="165.1" width="2.6" height="3.8" fill="#50642e" opacity="0.90"/><rect x="220.4" y="128.5" width="8.8" height="5.3" fill="#7c6241" opacity="0.77"/><rect x="326.3" y="15.9" width="6.4" height="6.3" fill="#46602a" opacity="0.64"/><rect x="379.0" y="96.7" width="8.8" height="6.8" fill="#55502c" opacity="0.76"/><rect x="19.9" y="242.7" width="5.2" height="5.1" fill="#86694a" opacity="0.61"/><rect x="212.4" y="122.1" width="4.3" height="7.1" fill="#4a6a2c" opacity="0.81"/><rect x="116.8" y="-0.3" width="4.1" height="2.7" fill="#3b5226" opacity="0.65"/><rect x="275.2" y="9.8" width="4.5" height="4.5" fill="#86694a" opacity="0.94"/><rect x="381.3" y="15.2" width="8.4" height="4.6" fill="#6d6637" opacity="0.58"/><rect x="304.2" y="7.9" width="3.1" height="6.6" fill="#6d6637" opacity="0.52"/><rect x="387.7" y="60.0" width="7.1" height="2.8" fill="#36481f" opacity="0.68"/><rect x="79.1" y="9.6" width="5.9" height="3.1" fill="#6d6637" opacity="0.52"/><rect x="166.1" y="152.9" width="6.7" height="5.9" fill="#927650" opacity="0.84"/><rect x="212.6" y="256.4" width="8.7" height="6.2" fill="#8a7048" opacity="0.69"/><rect x="201.2" y="76.5" width="5.8" height="6.7" fill="#50642e" opacity="0.59"/><rect x="275.5" y="143.4" width="6.3" height="5.7" fill="#a08258" opacity="0.57"/><rect x="384.4" y="127.1" width="6.7" height="3.5" fill="#4a6a2c" opacity="0.47"/><rect x="20.8" y="66.7" width="5.3" height="5.6" fill="#7c6241" opacity="0.56"/><rect x="109.5" y="193.3" width="8.4" height="3.3" fill="#8a7048" opacity="0.77"/><rect x="148.3" y="120.9" width="3.9" height="4.2" fill="#77603a" opacity="0.52"/><rect x="350.8" y="205.4" width="5.4" height="6.6" fill="#3f5a28" opacity="0.83"/><rect x="83.0" y="106.8" width="4.2" height="6.5" fill="#927650" opacity="0.53"/><rect x="337.2" y="151.7" width="4.4" height="6.3" fill="#3f5a28" opacity="0.91"/><rect x="170.5" y="92.4" width="3.1" height="6.9" fill="#7c6241" opacity="0.72"/><rect x="172.3" y="144.2" width="7.8" height="4.8" fill="#3f5a28" opacity="0.84"/><rect x="27.0" y="51.7" width="6.8" height="2.9" fill="#50642e" opacity="0.70"/><rect x="307.8" y="81.6" width="8.2" height="3.6" fill="#4a6a2c" opacity="0.81"/><rect x="145.5" y="26.6" width="7.1" height="5.3" fill="#4a6a2c" opacity="0.91"/><rect x="174.7" y="205.6" width="4.5" height="4.1" fill="#36481f" opacity="0.93"/><rect x="293.8" y="130.7" width="3.0" height="6.6" fill="#46602a" opacity="0.63"/><rect x="157.4" y="97.2" width="3.8" height="5.3" fill="#a08258" opacity="0.65"/><rect x="59.2" y="150.3" width="3.7" height="2.9" fill="#6d6637" opacity="0.89"/><rect x="110.8" y="1.8" width="5.9" height="5.2" fill="#86694a" opacity="0.60"/><rect x="5.1" y="215.7" width="5.2" height="5.4" fill="#50642e" opacity="0.84"/><rect x="30.3" y="17.3" width="7.3" height="7.0" fill="#7c6241" opacity="0.46"/><rect x="262.6" y="21.4" width="7.8" height="4.6" fill="#77603a" opacity="0.56"/><rect x="308.3" y="132.1" width="7.5" height="4.5" fill="#927650" opacity="0.85"/><rect x="131.9" y="31.7" width="5.7" height="6.5" fill="#7c6241" opacity="0.80"/><rect x="369.3" y="103.2" width="7.9" height="5.8" fill="#3f5a28" opacity="0.45"/><rect x="150.2" y="19.3" width="5.5" height="5.2" fill="#46602a" opacity="0.71"/><rect x="285.7" y="205.4" width="5.2" height="4.6" fill="#3b5226" opacity="0.57"/><rect x="62.2" y="161.8" width="6.9" height="4.1" fill="#36481f" opacity="0.66"/><rect x="115.1" y="249.1" width="2.9" height="4.0" fill="#7c6241" opacity="0.60"/><rect x="59.5" y="236.0" width="8.4" height="6.3" fill="#46602a" opacity="0.74"/><rect x="367.0" y="5.5" width="3.2" height="3.4" fill="#8a7048" opacity="0.74"/><rect x="240.8" y="119.2" width="5.8" height="4.7" fill="#50642e" opacity="0.65"/><rect x="367.6" y="240.6" width="6.6" height="7.2" fill="#55502c" opacity="0.69"/><rect x="102.3" y="227.6" width="8.4" height="4.2" fill="#55502c" opacity="0.84"/><rect x="33.7" y="221.1" width="5.1" height="3.6" fill="#3b5226" opacity="0.85"/><rect x="153.1" y="133.7" width="5.9" height="3.9" fill="#46602a" opacity="0.78"/><rect x="92.9" y="-1.2" width="5.6" height="4.4" fill="#a08258" opacity="0.57"/><rect x="167.9" y="224.3" width="5.2" height="6.4" fill="#3b5226" opacity="0.58"/><rect x="350.7" y="130.7" width="6.6" height="7.5" fill="#50642e" opacity="0.71"/><rect x="17.6" y="145.3" width="3.7" height="3.5" fill="#3f5a28" opacity="0.52"/><rect x="48.4" y="87.8" width="6.5" height="5.1" fill="#6d6637" opacity="0.80"/><rect x="29.8" y="191.4" width="6.0" height="5.0" fill="#46602a" opacity="0.84"/><rect x="166.1" y="235.3" width="3.1" height="6.6" fill="#8a7048" opacity="0.47"/><rect x="164.6" y="125.0" width="8.7" height="7.3" fill="#927650" opacity="0.61"/><rect x="27.0" y="75.8" width="5.5" height="6.1" fill="#927650" opacity="0.49"/><rect x="53.3" y="170.3" width="6.9" height="6.2" fill="#a08258" opacity="0.86"/><rect x="262.8" y="-0.8" width="5.0" height="6.1" fill="#8a7048" opacity="0.60"/><rect x="42.2" y="197.4" width="8.1" height="6.7" fill="#77603a" opacity="0.55"/><rect x="247.4" y="71.8" width="4.9" height="5.2" fill="#50642e" opacity="0.93"/><rect x="304.0" y="141.0" width="3.1" height="3.4" fill="#36481f" opacity="0.82"/><rect x="130.4" y="242.7" width="6.2" height="6.1" fill="#927650" opacity="0.67"/><rect x="152.0" y="22.6" width="6.5" height="3.2" fill="#4a6a2c" opacity="0.80"/><rect x="69.4" y="101.0" width="7.9" height="5.5" fill="#7c6241" opacity="0.50"/><rect x="9.2" y="253.7" width="5.3" height="6.4" fill="#927650" opacity="0.91"/><rect x="170.2" y="129.5" width="6.7" height="6.3" fill="#3f5a28" opacity="0.80"/><rect x="193.0" y="236.5" width="6.5" height="6.1" fill="#86694a" opacity="0.80"/><rect x="396.6" y="202.1" width="6.8" height="5.5" fill="#46602a" opacity="0.58"/><rect x="73.0" y="76.1" width="5.4" height="5.3" fill="#8a7048" opacity="0.70"/><rect x="317.7" y="211.4" width="6.5" height="3.3" fill="#a08258" opacity="0.72"/><rect x="117.8" y="57.1" width="6.5" height="5.1" fill="#86694a" opacity="0.81"/><rect x="398.6" y="130.7" width="7.2" height="6.7" fill="#8a7048" opacity="0.73"/><rect x="6.9" y="168.1" width="7.5" height="3.2" fill="#6d6637" opacity="0.74"/><rect x="280.4" y="81.9" width="8.5" height="4.3" fill="#6d6637" opacity="0.89"/><rect x="180.5" y="186.5" width="4.1" height="5.3" fill="#55502c" opacity="0.73"/><rect x="224.6" y="65.0" width="8.4" height="7.5" fill="#3f5a28" opacity="0.62"/><rect x="55.4" y="239.8" width="2.5" height="5.9" fill="#927650" opacity="0.57"/><rect x="230.0" y="212.8" width="3.7" height="5.2" fill="#7c6241" opacity="0.68"/><rect x="160.6" y="200.3" width="8.5" height="7.5" fill="#3b5226" opacity="0.60"/><rect x="269.9" y="188.5" width="5.0" height="5.5" fill="#a08258" opacity="0.83"/><rect x="60.7" y="103.5" width="2.7" height="5.1" fill="#7c6241" opacity="0.73"/><rect x="66.9" y="131.7" width="4.2" height="5.3" fill="#927650" opacity="0.48"/><rect x="315.9" y="184.3" width="7.6" height="4.5" fill="#6d6637" opacity="0.75"/><rect x="187.7" y="103.4" width="6.6" height="5.9" fill="#a08258" opacity="0.65"/><rect x="110.9" y="228.1" width="5.5" height="7.0" fill="#77603a" opacity="0.65"/><rect x="173.1" y="143.7" width="8.4" height="5.1" fill="#55502c" opacity="0.71"/><rect x="167.5" y="2.3" width="8.4" height="4.0" fill="#86694a" opacity="0.90"/><rect x="294.7" y="152.0" width="7.4" height="4.0" fill="#86694a" opacity="0.89"/><rect x="95.7" y="216.4" width="4.1" height="6.9" fill="#46602a" opacity="0.69"/><rect x="39.0" y="233.5" width="6.0" height="5.8" fill="#8a7048" opacity="0.89"/><rect x="403.7" y="186.7" width="8.2" height="4.3" fill="#55502c" opacity="0.66"/><rect x="324.5" y="53.9" width="7.4" height="5.3" fill="#7c6241" opacity="0.50"/><rect x="319.3" y="28.3" width="6.0" height="7.3" fill="#46602a" opacity="0.60"/><rect x="293.1" y="2.2" width="3.6" height="4.7" fill="#6d6637" opacity="0.86"/><rect x="158.1" y="89.0" width="6.3" height="2.7" fill="#46602a" opacity="0.68"/><rect x="124.0" y="80.7" width="3.4" height="6.4" fill="#a08258" opacity="0.69"/><rect x="80.3" y="73.1" width="8.5" height="7.0" fill="#8a7048" opacity="0.61"/><rect x="346.5" y="230.7" width="2.6" height="5.7" fill="#77603a" opacity="0.95"/><rect x="78.4" y="161.1" width="3.7" height="6.9" fill="#46602a" opacity="0.78"/><rect x="120.9" y="209.4" width="8.7" height="3.9" fill="#36481f" opacity="0.81"/><rect x="51.0" y="177.6" width="8.6" height="4.7" fill="#7c6241" opacity="0.53"/><rect x="347.5" y="27.5" width="7.0" height="3.8" fill="#77603a" opacity="0.57"/><rect x="267.2" y="202.3" width="4.9" height="5.8" fill="#7c6241" opacity="0.74"/><rect x="89.4" y="74.5" width="8.5" height="5.8" fill="#50642e" opacity="0.52"/><rect x="268.5" y="116.8" width="3.0" height="7.1" fill="#7c6241" opacity="0.72"/><rect x="14.5" y="152.5" width="4.3" height="3.8" fill="#a08258" opacity="0.73"/><rect x="63.1" y="254.0" width="3.7" height="3.4" fill="#77603a" opacity="0.72"/><rect x="72.0" y="230.1" width="8.9" height="2.7" fill="#6d6637" opacity="0.91"/><rect x="234.6" y="-3.3" width="8.3" height="2.8" fill="#7c6241" opacity="0.73"/><rect x="259.1" y="89.9" width="6.8" height="6.4" fill="#55502c" opacity="0.60"/><rect x="333.4" y="161.7" width="8.9" height="6.2" fill="#55502c" opacity="0.54"/><rect x="314.1" y="39.1" width="6.5" height="3.7" fill="#6d6637" opacity="0.72"/><rect x="100.5" y="182.9" width="7.2" height="3.8" fill="#55502c" opacity="0.56"/><rect x="232.7" y="126.2" width="2.7" height="5.5" fill="#77603a" opacity="0.48"/><rect x="178.9" y="225.8" width="4.6" height="5.5" fill="#86694a" opacity="0.70"/><rect x="173.3" y="111.3" width="4.2" height="6.5" fill="#7c6241" opacity="0.51"/><rect x="68.7" y="163.0" width="6.3" height="6.1" fill="#86694a" opacity="0.52"/><rect x="122.9" y="7.0" width="4.5" height="5.6" fill="#55502c" opacity="0.84"/><rect x="308.2" y="126.1" width="6.7" height="5.1" fill="#36481f" opacity="0.58"/><rect x="61.2" y="176.3" width="7.9" height="6.4" fill="#46602a" opacity="0.61"/><rect x="186.5" y="178.3" width="7.1" height="7.3" fill="#3b5226" opacity="0.69"/><rect x="306.6" y="253.4" width="3.4" height="4.8" fill="#77603a" opacity="0.94"/><rect x="-2.6" y="103.0" width="5.9" height="3.0" fill="#55502c" opacity="0.60"/><rect x="169.2" y="16.0" width="2.7" height="7.5" fill="#a08258" opacity="0.94"/><rect x="245.9" y="73.2" width="3.3" height="6.8" fill="#36481f" opacity="0.68"/><rect x="376.4" y="91.0" width="4.7" height="7.4" fill="#86694a" opacity="0.56"/><rect x="61.4" y="148.7" width="9.0" height="6.2" fill="#86694a" opacity="0.80"/><rect x="348.7" y="150.2" width="8.3" height="4.8" fill="#36481f" opacity="0.92"/><rect x="83.0" y="94.8" width="2.8" height="4.6" fill="#8a7048" opacity="0.54"/><rect x="220.2" y="38.8" width="3.8" height="3.6" fill="#6d6637" opacity="0.83"/><rect x="188.8" y="123.9" width="6.6" height="3.4" fill="#6d6637" opacity="0.55"/><rect x="152.2" y="15.0" width="7.0" height="4.3" fill="#50642e" opacity="0.76"/><rect x="207.7" y="189.6" width="5.8" height="5.3" fill="#4a6a2c" opacity="0.81"/><rect x="105.6" y="90.2" width="3.5" height="7.2" fill="#927650" opacity="0.52"/><rect x="94.3" y="215.1" width="3.3" height="7.5" fill="#3f5a28" opacity="0.64"/><rect x="29.9" y="226.3" width="4.6" height="6.4" fill="#55502c" opacity="0.78"/><rect x="119.3" y="154.7" width="5.7" height="3.4" fill="#55502c" opacity="0.75"/><rect x="9.0" y="77.5" width="5.3" height="5.2" fill="#3b5226" opacity="0.71"/><rect x="219.6" y="77.9" width="5.4" height="4.4" fill="#8a7048" opacity="0.87"/><rect x="214.3" y="113.3" width="3.4" height="5.1" fill="#927650" opacity="0.56"/><rect x="115.2" y="86.0" width="3.9" height="2.7" fill="#46602a" opacity="0.82"/><rect x="193.0" y="-1.0" width="7.5" height="6.2" fill="#4a6a2c" opacity="0.79"/><rect x="371.0" y="52.4" width="7.0" height="5.8" fill="#a08258" opacity="0.88"/><rect x="91.7" y="161.1" width="3.1" height="4.6" fill="#36481f" opacity="0.70"/><rect x="195.9" y="238.9" width="4.3" height="6.0" fill="#8a7048" opacity="0.53"/><rect x="160.2" y="120.0" width="3.6" height="5.8" fill="#8a7048" opacity="0.71"/><rect x="299.1" y="232.9" width="7.7" height="4.9" fill="#50642e" opacity="0.80"/><rect x="221.7" y="178.7" width="2.6" height="4.5" fill="#927650" opacity="0.90"/><rect x="368.3" y="67.0" width="5.0" height="6.7" fill="#50642e" opacity="0.68"/><rect x="128.8" y="62.1" width="2.7" height="4.2" fill="#927650" opacity="0.73"/><rect x="102.9" y="170.4" width="3.7" height="4.8" fill="#86694a" opacity="0.62"/><rect x="362.3" y="4.1" width="7.1" height="3.6" fill="#7c6241" opacity="0.76"/><rect x="249.3" y="103.3" width="5.2" height="3.9" fill="#3f5a28" opacity="0.68"/><rect x="179.4" y="248.2" width="5.0" height="6.5" fill="#4a6a2c" opacity="0.70"/><rect x="121.9" y="90.1" width="8.9" height="3.2" fill="#8a7048" opacity="0.58"/><rect x="101.3" y="53.4" width="5.9" height="7.1" fill="#36481f" opacity="0.45"/><rect x="219.2" y="217.6" width="7.5" height="2.9" fill="#3f5a28" opacity="0.73"/><rect x="335.1" y="248.9" width="4.7" height="4.2" fill="#46602a" opacity="0.61"/><rect x="288.1" y="177.5" width="7.0" height="7.3" fill="#3f5a28" opacity="0.53"/><rect x="131.9" y="175.9" width="7.7" height="4.0" fill="#36481f" opacity="0.59"/><rect x="301.6" y="135.4" width="4.0" height="3.7" fill="#927650" opacity="0.80"/><rect x="370.3" y="188.5" width="8.2" height="7.4" fill="#3f5a28" opacity="0.50"/><rect x="283.5" y="25.4" width="5.4" height="6.4" fill="#6d6637" opacity="0.47"/><rect x="249.6" y="103.7" width="5.6" height="4.2" fill="#36481f" opacity="0.70"/><rect x="321.0" y="98.4" width="7.2" height="3.8" fill="#77603a" opacity="0.79"/><rect x="70.9" y="219.4" width="3.8" height="5.3" fill="#3b5226" opacity="0.73"/><rect x="167.6" y="180.5" width="6.5" height="6.7" fill="#a08258" opacity="0.53"/><rect x="78.0" y="158.1" width="4.4" height="5.8" fill="#46602a" opacity="0.69"/><rect x="279.1" y="202.4" width="8.5" height="3.8" fill="#50642e" opacity="0.66"/><rect x="253.6" y="99.5" width="8.6" height="7.4" fill="#46602a" opacity="0.53"/><rect x="402.9" y="223.3" width="3.8" height="4.3" fill="#55502c" opacity="0.95"/><rect x="45.0" y="82.1" width="2.7" height="5.2" fill="#6d6637" opacity="0.54"/><rect x="23.5" y="110.5" width="8.2" height="5.7" fill="#8a7048" opacity="0.65"/><rect x="248.0" y="195.8" width="8.9" height="4.4" fill="#77603a" opacity="0.56"/><rect x="111.3" y="222.2" width="5.4" height="6.7" fill="#55502c" opacity="0.92"/><rect x="98.6" y="123.4" width="3.3" height="4.1" fill="#46602a" opacity="0.59"/><rect x="228.1" y="67.5" width="5.1" height="4.1" fill="#7c6241" opacity="0.69"/><rect x="145.3" y="63.8" width="2.8" height="2.8" fill="#a08258" opacity="0.60"/><rect x="28.0" y="43.6" width="5.6" height="7.5" fill="#8a7048" opacity="0.95"/><rect x="162.7" y="4.4" width="4.8" height="5.3" fill="#55502c" opacity="0.48"/><rect x="220.6" y="167.4" width="6.5" height="3.9" fill="#50642e" opacity="0.88"/><rect x="401.7" y="111.7" width="7.9" height="6.1" fill="#3b5226" opacity="0.88"/><rect x="381.4" y="136.7" width="6.9" height="3.9" fill="#46602a" opacity="0.83"/><rect x="122.5" y="130.2" width="2.6" height="3.6" fill="#927650" opacity="0.46"/><rect x="211.1" y="207.4" width="7.6" height="6.2" fill="#36481f" opacity="0.60"/><rect x="212.8" y="169.8" width="7.7" height="6.3" fill="#6d6637" opacity="0.65"/><rect x="283.7" y="61.4" width="8.4" height="2.6" fill="#86694a" opacity="0.52"/><rect x="128.0" y="185.0" width="5.8" height="3.9" fill="#927650" opacity="0.76"/><rect x="179.5" y="77.5" width="2.9" height="5.8" fill="#86694a" opacity="0.50"/><rect x="132.6" y="189.6" width="3.9" height="6.2" fill="#55502c" opacity="0.60"/><rect x="80.0" y="86.7" width="3.5" height="4.4" fill="#3b5226" opacity="0.67"/><rect x="-0.1" y="127.2" width="5.1" height="4.1" fill="#55502c" opacity="0.87"/><rect x="306.7" y="1.4" width="3.6" height="2.8" fill="#86694a" opacity="0.50"/><rect x="398.9" y="108.3" width="8.8" height="3.6" fill="#36481f" opacity="0.84"/><rect x="358.2" y="208.1" width="3.0" height="4.5" fill="#927650" opacity="0.89"/><rect x="313.3" y="133.0" width="2.6" height="6.2" fill="#4a6a2c" opacity="0.64"/><rect x="258.7" y="51.4" width="6.5" height="6.9" fill="#3f5a28" opacity="0.81"/><rect x="169.0" y="249.0" width="8.5" height="3.1" fill="#77603a" opacity="0.79"/><rect x="180.9" y="169.7" width="5.2" height="4.4" fill="#8a7048" opacity="0.64"/><rect x="216.8" y="7.1" width="8.5" height="5.1" fill="#6d6637" opacity="0.67"/><rect x="238.1" y="151.2" width="8.6" height="3.3" fill="#6d6637" opacity="0.61"/><rect x="100.4" y="158.6" width="3.7" height="4.8" fill="#55502c" opacity="0.65"/><rect x="349.9" y="29.1" width="8.9" height="5.0" fill="#8a7048" opacity="0.54"/><rect x="373.0" y="202.2" width="3.4" height="3.1" fill="#7c6241" opacity="0.71"/><rect x="401.4" y="12.9" width="8.2" height="6.1" fill="#50642e" opacity="0.71"/><rect x="138.3" y="50.1" width="2.6" height="4.6" fill="#6d6637" opacity="0.59"/><rect x="258.6" y="15.2" width="6.1" height="6.4" fill="#6d6637" opacity="0.89"/><rect x="25.4" y="125.6" width="2.9" height="6.8" fill="#7c6241" opacity="0.85"/><rect x="57.9" y="91.5" width="3.2" height="2.7" fill="#927650" opacity="0.93"/><rect x="85.6" y="71.3" width="5.2" height="5.6" fill="#46602a" opacity="0.87"/><rect x="247.8" y="231.4" width="3.0" height="7.4" fill="#8a7048" opacity="0.72"/><rect x="125.1" y="245.8" width="8.8" height="5.3" fill="#36481f" opacity="0.64"/><rect x="329.1" y="178.7" width="8.0" height="7.2" fill="#4a6a2c" opacity="0.75"/><rect x="279.5" y="43.2" width="3.3" height="6.0" fill="#6d6637" opacity="0.47"/><rect x="109.5" y="63.5" width="4.7" height="5.6" fill="#50642e" opacity="0.55"/><rect x="401.9" y="176.5" width="7.3" height="4.3" fill="#50642e" opacity="0.83"/><rect x="77.7" y="14.6" width="4.2" height="4.4" fill="#86694a" opacity="0.65"/><rect x="182.4" y="128.2" width="8.6" height="4.2" fill="#77603a" opacity="0.66"/><rect x="197.0" y="26.7" width="3.3" height="6.9" fill="#3f5a28" opacity="0.49"/><rect x="260.5" y="54.9" width="5.6" height="3.5" fill="#36481f" opacity="0.75"/><rect x="179.0" y="12.8" width="5.2" height="3.9" fill="#6d6637" opacity="0.78"/><rect x="105.2" y="168.7" width="2.6" height="5.6" fill="#46602a" opacity="0.66"/><rect x="49.9" y="229.7" width="4.1" height="4.6" fill="#927650" opacity="0.50"/><rect x="355.1" y="196.7" width="3.2" height="5.8" fill="#6d6637" opacity="0.90"/><rect x="32.1" y="90.9" width="4.9" height="6.1" fill="#4a6a2c" opacity="0.80"/><rect x="399.9" y="208.9" width="8.2" height="5.8" fill="#3b5226" opacity="0.68"/><rect x="143.6" y="117.3" width="4.6" height="5.9" fill="#86694a" opacity="0.48"/><rect x="86.7" y="1.5" width="7.6" height="4.7" fill="#8a7048" opacity="0.77"/><rect x="282.0" y="256.4" width="2.9" height="4.8" fill="#36481f" opacity="0.85"/><rect x="376.3" y="131.2" width="6.3" height="5.0" fill="#3f5a28" opacity="0.52"/><rect x="157.0" y="189.6" width="3.0" height="3.3" fill="#4a6a2c" opacity="0.80"/><rect x="316.8" y="232.5" width="6.8" height="7.3" fill="#6d6637" opacity="0.84"/><rect x="44.8" y="118.3" width="2.6" height="6.8" fill="#3f5a28" opacity="0.90"/><rect x="5.9" y="87.6" width="6.0" height="5.2" fill="#7c6241" opacity="0.84"/><rect x="34.5" y="256.7" width="6.2" height="2.8" fill="#8a7048" opacity="0.51"/><rect x="32.1" y="129.7" width="4.4" height="6.4" fill="#8a7048" opacity="0.75"/><rect x="186.3" y="254.3" width="6.3" height="3.4" fill="#7c6241" opacity="0.68"/><rect x="343.1" y="23.2" width="8.0" height="3.3" fill="#86694a" opacity="0.71"/><rect x="161.8" y="155.8" width="8.1" height="7.3" fill="#36481f" opacity="0.86"/><rect x="89.4" y="204.1" width="3.2" height="6.2" fill="#36481f" opacity="0.53"/><rect x="212.7" y="3.4" width="3.2" height="4.0" fill="#55502c" opacity="0.77"/><rect x="341.8" y="8.0" width="5.2" height="2.9" fill="#50642e" opacity="0.72"/><rect x="264.1" y="105.4" width="8.3" height="3.5" fill="#55502c" opacity="0.92"/><rect x="227.7" y="126.7" width="8.4" height="4.5" fill="#50642e" opacity="0.58"/><rect x="240.7" y="53.4" width="3.0" height="6.5" fill="#36481f" opacity="0.63"/><rect x="171.6" y="113.7" width="2.8" height="6.7" fill="#46602a" opacity="0.53"/><rect x="151.9" y="80.2" width="7.8" height="5.9" fill="#77603a" opacity="0.64"/><rect x="124.3" y="122.3" width="4.0" height="6.2" fill="#6d6637" opacity="0.82"/><rect x="148.4" y="150.8" width="3.2" height="5.9" fill="#927650" opacity="0.93"/><rect x="145.2" y="152.1" width="4.9" height="4.0" fill="#86694a" opacity="0.83"/><rect x="18.9" y="43.9" width="3.3" height="6.3" fill="#927650" opacity="0.48"/><rect x="33.9" y="61.8" width="4.3" height="6.5" fill="#36481f" opacity="0.77"/><rect x="148.3" y="19.4" width="6.2" height="3.0" fill="#36481f" opacity="0.94"/><rect x="335.3" y="81.7" width="4.6" height="6.6" fill="#a08258" opacity="0.59"/><rect x="111.2" y="256.9" width="5.7" height="4.5" fill="#7c6241" opacity="0.73"/><rect x="374.3" y="162.7" width="2.6" height="7.2" fill="#a08258" opacity="0.56"/><rect x="219.1" y="211.0" width="5.6" height="4.2" fill="#4a6a2c" opacity="0.94"/><rect x="370.0" y="15.6" width="7.6" height="4.7" fill="#a08258" opacity="0.52"/><rect x="304.8" y="172.7" width="7.7" height="4.7" fill="#77603a" opacity="0.81"/><rect x="336.9" y="245.7" width="4.8" height="6.7" fill="#77603a" opacity="0.51"/><rect x="44.3" y="76.9" width="8.7" height="5.3" fill="#3f5a28" opacity="0.56"/><rect x="165.2" y="136.0" width="8.0" height="3.1" fill="#3f5a28" opacity="0.59"/><rect x="162.3" y="230.0" width="8.5" height="3.5" fill="#77603a" opacity="0.91"/><rect x="197.4" y="176.0" width="5.0" height="6.4" fill="#7c6241" opacity="0.72"/><rect x="344.8" y="197.7" width="4.6" height="2.6" fill="#3f5a28" opacity="0.53"/><rect x="138.7" y="150.4" width="5.9" height="4.4" fill="#86694a" opacity="0.74"/><rect x="184.6" y="197.2" width="3.5" height="6.0" fill="#36481f" opacity="0.61"/><rect x="280.5" y="57.0" width="4.2" height="6.2" fill="#86694a" opacity="0.47"/><rect x="372.1" y="205.5" width="4.2" height="3.7" fill="#8a7048" opacity="0.67"/><rect x="248.0" y="142.0" width="8.8" height="7.0" fill="#6d6637" opacity="0.64"/><rect x="44.0" y="44.6" width="6.5" height="5.9" fill="#55502c" opacity="0.87"/><rect x="10.3" y="178.3" width="6.2" height="5.3" fill="#927650" opacity="0.69"/><rect x="178.3" y="249.4" width="4.8" height="4.0" fill="#8a7048" opacity="0.84"/><rect x="85.1" y="48.0" width="6.0" height="5.5" fill="#7c6241" opacity="0.53"/><rect x="73.6" y="40.0" width="9.0" height="4.3" fill="#927650" opacity="0.63"/><rect x="384.0" y="183.5" width="4.4" height="6.8" fill="#77603a" opacity="0.94"/><rect x="41.1" y="89.4" width="3.6" height="6.9" fill="#4a6a2c" opacity="0.60"/><rect x="99.2" y="30.3" width="5.7" height="3.9" fill="#50642e" opacity="0.85"/><rect x="380.9" y="35.7" width="5.0" height="6.6" fill="#55502c" opacity="0.88"/><rect x="244.6" y="137.9" width="7.3" height="5.2" fill="#4a6a2c" opacity="0.80"/><rect x="236.4" y="162.6" width="4.5" height="4.6" fill="#a08258" opacity="0.63"/><rect x="317.2" y="56.9" width="5.4" height="4.4" fill="#77603a" opacity="0.56"/><rect x="257.1" y="66.7" width="7.2" height="6.9" fill="#7c6241" opacity="0.92"/><rect x="41.0" y="241.5" width="6.8" height="2.9" fill="#46602a" opacity="0.50"/><rect x="226.7" y="27.2" width="8.9" height="4.0" fill="#3f5a28" opacity="0.52"/><rect x="383.3" y="169.5" width="3.4" height="4.6" fill="#3b5226" opacity="0.94"/><rect x="275.5" y="219.2" width="7.6" height="5.1" fill="#7c6241" opacity="0.67"/><rect x="273.2" y="18.5" width="7.0" height="5.6" fill="#8a7048" opacity="0.89"/><rect x="37.5" y="32.4" width="3.8" height="6.0" fill="#46602a" opacity="0.73"/><rect x="392.8" y="142.5" width="3.4" height="4.0" fill="#927650" opacity="0.56"/><rect x="107.2" y="35.4" width="6.0" height="6.9" fill="#3b5226" opacity="0.88"/><rect x="377.5" y="1.3" width="5.7" height="5.5" fill="#4a6a2c" opacity="0.74"/><rect x="362.5" y="78.5" width="3.6" height="6.3" fill="#3b5226" opacity="0.93"/><rect x="9.0" y="25.2" width="8.1" height="7.3" fill="#46602a" opacity="0.66"/><rect x="56.8" y="44.6" width="6.4" height="6.7" fill="#a08258" opacity="0.83"/><rect x="325.6" y="-3.8" width="2.9" height="6.5" fill="#36481f" opacity="0.87"/><rect x="162.3" y="83.6" width="4.8" height="2.6" fill="#a08258" opacity="0.57"/><rect x="15.5" y="92.5" width="7.2" height="5.1" fill="#927650" opacity="0.68"/><rect x="91.6" y="226.2" width="3.6" height="3.2" fill="#50642e" opacity="0.68"/><rect x="86.1" y="235.8" width="3.7" height="5.9" fill="#86694a" opacity="0.58"/><rect x="209.3" y="62.5" width="8.2" height="3.4" fill="#8a7048" opacity="0.48"/><rect x="204.0" y="189.0" width="3.8" height="2.7" fill="#8a7048" opacity="0.72"/><rect x="28.1" y="195.3" width="4.1" height="3.6" fill="#36481f" opacity="0.73"/><rect x="52.3" y="170.8" width="3.0" height="2.9" fill="#3f5a28" opacity="0.64"/><rect x="51.3" y="202.1" width="7.6" height="4.2" fill="#a08258" opacity="0.55"/><rect x="365.9" y="142.7" width="8.6" height="2.8" fill="#3f5a28" opacity="0.91"/><rect x="17.2" y="4.6" width="8.7" height="4.6" fill="#3b5226" opacity="0.52"/><rect x="79.9" y="225.2" width="8.7" height="7.2" fill="#927650" opacity="0.52"/><rect x="51.6" y="205.7" width="4.6" height="2.7" fill="#8a7048" opacity="0.52"/><rect x="272.7" y="226.3" width="7.2" height="7.2" fill="#6d6637" opacity="0.63"/><rect x="292.5" y="237.1" width="3.5" height="6.9" fill="#3b5226" opacity="0.81"/><rect x="272.0" y="28.1" width="4.6" height="5.4" fill="#50642e" opacity="0.71"/><rect x="216.4" y="144.2" width="7.5" height="5.1" fill="#7c6241" opacity="0.49"/><rect x="87.0" y="16.0" width="4.5" height="6.3" fill="#4a6a2c" opacity="0.70"/><rect x="61.4" y="82.2" width="6.2" height="4.0" fill="#a08258" opacity="0.90"/><rect x="239.8" y="87.4" width="9.0" height="4.9" fill="#46602a" opacity="0.55"/><rect x="381.2" y="251.2" width="2.7" height="6.3" fill="#36481f" opacity="0.72"/><rect x="111.0" y="7.9" width="5.1" height="6.6" fill="#46602a" opacity="0.46"/><rect x="169.0" y="246.9" width="6.5" height="2.8" fill="#46602a" opacity="0.54"/><rect x="2.2" y="75.4" width="2.8" height="3.8" fill="#86694a" opacity="0.73"/><rect x="276.6" y="61.4" width="7.3" height="3.3" fill="#3b5226" opacity="0.89"/><rect x="233.0" y="104.8" width="6.0" height="4.8" fill="#927650" opacity="0.92"/><rect x="196.5" y="172.9" width="6.5" height="7.0" fill="#4a6a2c" opacity="0.53"/><rect x="203.6" y="253.0" width="4.4" height="3.4" fill="#77603a" opacity="0.61"/><rect x="222.4" y="101.4" width="7.1" height="4.2" fill="#4a6a2c" opacity="0.50"/><rect x="276.4" y="86.6" width="6.1" height="5.0" fill="#a08258" opacity="0.71"/><rect x="150.6" y="-3.6" width="5.7" height="3.8" fill="#86694a" opacity="0.87"/><rect x="228.0" y="10.7" width="4.6" height="5.7" fill="#46602a" opacity="0.77"/><rect x="391.8" y="69.1" width="5.4" height="2.9" fill="#a08258" opacity="0.48"/><rect x="234.0" y="100.0" width="2.8" height="3.5" fill="#4a6a2c" opacity="0.70"/><rect x="169.9" y="140.9" width="8.6" height="4.9" fill="#6d6637" opacity="0.53"/><rect x="124.9" y="169.8" width="5.8" height="7.1" fill="#4a6a2c" opacity="0.56"/><rect x="336.3" y="205.7" width="8.9" height="7.1" fill="#4a6a2c" opacity="0.57"/><rect x="293.5" y="67.4" width="4.4" height="6.9" fill="#7c6241" opacity="0.86"/><rect x="119.7" y="59.7" width="8.5" height="2.6" fill="#55502c" opacity="0.78"/><rect x="188.1" y="164.1" width="6.9" height="4.5" fill="#4a6a2c" opacity="0.88"/><rect x="394.3" y="37.7" width="4.2" height="3.9" fill="#36481f" opacity="0.61"/><rect x="71.9" y="177.2" width="7.4" height="7.4" fill="#86694a" opacity="0.77"/><rect x="301.6" y="170.6" width="5.3" height="4.5" fill="#36481f" opacity="0.84"/><rect x="352.4" y="144.5" width="8.6" height="5.7" fill="#6d6637" opacity="0.56"/><rect x="286.1" y="6.2" width="8.2" height="5.0" fill="#8a7048" opacity="0.57"/><rect x="248.3" y="26.7" width="3.5" height="4.7" fill="#6d6637" opacity="0.59"/><rect x="72.4" y="165.1" width="7.0" height="7.2" fill="#927650" opacity="0.61"/><rect x="18.2" y="2.9" width="6.0" height="5.4" fill="#50642e" opacity="0.93"/><rect x="311.8" y="83.0" width="4.3" height="5.1" fill="#6d6637" opacity="0.48"/><rect x="35.4" y="180.0" width="2.8" height="6.3" fill="#55502c" opacity="0.57"/><rect x="77.3" y="147.6" width="4.1" height="4.1" fill="#7c6241" opacity="0.62"/><rect x="387.1" y="73.2" width="8.1" height="6.8" fill="#55502c" opacity="0.66"/><rect x="162.0" y="57.4" width="5.6" height="7.3" fill="#7c6241" opacity="0.66"/><rect x="190.2" y="104.6" width="6.6" height="6.5" fill="#55502c" opacity="0.90"/><rect x="98.5" y="137.3" width="9.0" height="5.1" fill="#8a7048" opacity="0.54"/><rect x="398.7" y="156.6" width="3.7" height="7.3" fill="#a08258" opacity="0.81"/><rect x="292.5" y="79.3" width="7.5" height="5.7" fill="#77603a" opacity="0.48"/><rect x="20.8" y="250.7" width="8.7" height="3.5" fill="#50642e" opacity="0.89"/><rect x="18.9" y="14.5" width="4.3" height="6.0" fill="#6d6637" opacity="0.88"/><rect x="402.1" y="126.0" width="7.6" height="3.7" fill="#3f5a28" opacity="0.77"/><rect x="274.0" y="156.7" width="2.8" height="6.1" fill="#3b5226" opacity="0.57"/><rect x="228.7" y="101.1" width="5.0" height="6.2" fill="#77603a" opacity="0.68"/><rect x="39.1" y="244.9" width="8.0" height="4.9" fill="#86694a" opacity="0.89"/><rect x="373.9" y="162.5" width="4.7" height="2.6" fill="#3f5a28" opacity="0.88"/><rect x="203.6" y="103.1" width="5.1" height="6.9" fill="#50642e" opacity="0.47"/><rect x="33.7" y="65.9" width="3.8" height="5.8" fill="#8a7048" opacity="0.68"/><rect x="124.7" y="158.8" width="5.2" height="4.0" fill="#a08258" opacity="0.49"/><rect x="295.9" y="159.3" width="6.1" height="5.8" fill="#4a6a2c" opacity="0.90"/><rect x="394.4" y="201.1" width="5.1" height="5.9" fill="#77603a" opacity="0.56"/><rect x="89.3" y="153.7" width="6.4" height="7.5" fill="#6d6637" opacity="0.67"/><rect x="262.6" y="55.0" width="7.5" height="5.2" fill="#77603a" opacity="0.62"/><rect x="286.4" y="0.4" width="5.2" height="6.3" fill="#50642e" opacity="0.50"/><rect x="150.9" y="221.5" width="4.4" height="7.3" fill="#77603a" opacity="0.91"/><rect x="20.4" y="148.2" width="7.8" height="6.7" fill="#36481f" opacity="0.48"/><rect x="394.9" y="181.9" width="4.7" height="4.3" fill="#6d6637" opacity="0.58"/><rect x="283.7" y="142.5" width="6.0" height="7.4" fill="#3b5226" opacity="0.83"/><rect x="234.5" y="207.3" width="5.8" height="2.6" fill="#a08258" opacity="0.73"/><rect x="211.5" y="125.2" width="3.6" height="5.6" fill="#6d6637" opacity="0.78"/><rect x="114.0" y="206.4" width="5.2" height="3.2" fill="#86694a" opacity="0.47"/><rect x="184.8" y="141.4" width="5.4" height="2.6" fill="#50642e" opacity="0.63"/><rect x="305.6" y="15.7" width="4.5" height="6.0" fill="#77603a" opacity="0.63"/><rect x="84.1" y="180.1" width="3.5" height="5.4" fill="#55502c" opacity="0.46"/><rect x="148.8" y="167.5" width="3.5" height="4.1" fill="#3f5a28" opacity="0.87"/><rect x="245.4" y="49.9" width="2.7" height="7.1" fill="#4a6a2c" opacity="0.85"/><rect x="297.5" y="65.0" width="5.7" height="6.0" fill="#46602a" opacity="0.78"/><rect x="114.8" y="82.3" width="6.6" height="4.3" fill="#927650" opacity="0.62"/><rect x="354.4" y="53.0" width="5.6" height="4.1" fill="#6d6637" opacity="0.91"/><rect x="317.6" y="69.5" width="5.8" height="4.3" fill="#55502c" opacity="0.56"/><rect x="248.8" y="35.2" width="8.8" height="4.2" fill="#6d6637" opacity="0.89"/><rect x="67.7" y="43.6" width="6.4" height="6.3" fill="#6d6637" opacity="0.63"/><rect x="284.2" y="52.4" width="8.2" height="6.9" fill="#8a7048" opacity="0.69"/><rect x="20.1" y="124.7" width="6.8" height="6.8" fill="#77603a" opacity="0.48"/><rect x="339.2" y="137.8" width="6.3" height="3.0" fill="#46602a" opacity="0.75"/><rect x="306.8" y="124.4" width="6.0" height="4.4" fill="#a08258" opacity="0.50"/><rect x="4.5" y="177.9" width="3.6" height="3.9" fill="#4a6a2c" opacity="0.53"/><rect x="272.9" y="10.0" width="7.6" height="3.6" fill="#46602a" opacity="0.63"/><rect x="142.9" y="61.0" width="4.4" height="3.8" fill="#46602a" opacity="0.63"/><rect x="165.9" y="41.0" width="3.6" height="3.3" fill="#7c6241" opacity="0.68"/><rect x="204.8" y="77.4" width="8.3" height="6.3" fill="#86694a" opacity="0.85"/><rect x="177.3" y="183.4" width="4.1" height="6.6" fill="#927650" opacity="0.70"/><rect x="187.2" y="134.0" width="6.0" height="6.4" fill="#3f5a28" opacity="0.56"/><rect x="5.1" y="74.6" width="2.7" height="6.5" fill="#86694a" opacity="0.68"/><rect x="208.9" y="91.9" width="8.5" height="5.3" fill="#6d6637" opacity="0.80"/><rect x="299.8" y="114.7" width="5.1" height="5.3" fill="#86694a" opacity="0.95"/><rect x="370.1" y="214.0" width="3.0" height="3.7" fill="#927650" opacity="0.72"/><rect x="206.0" y="76.9" width="8.1" height="5.1" fill="#7c6241" opacity="0.72"/><rect x="42.0" y="222.1" width="7.7" height="6.1" fill="#a08258" opacity="0.51"/><rect x="225.5" y="241.2" width="5.3" height="6.3" fill="#86694a" opacity="0.48"/><rect x="285.5" y="13.9" width="7.3" height="3.7" fill="#6d6637" opacity="0.56"/><rect x="178.4" y="137.9" width="4.7" height="5.4" fill="#4a6a2c" opacity="0.76"/><rect x="1.0" y="184.3" width="8.5" height="5.5" fill="#8a7048" opacity="0.83"/><rect x="132.2" y="246.0" width="6.1" height="3.0" fill="#4a6a2c" opacity="0.54"/><rect x="72.8" y="203.9" width="4.0" height="3.3" fill="#927650" opacity="0.47"/><rect x="321.5" y="32.7" width="3.8" height="2.6" fill="#3b5226" opacity="0.89"/><rect x="259.1" y="252.9" width="7.7" height="7.0" fill="#77603a" opacity="0.54"/><rect x="255.1" y="156.6" width="8.6" height="2.7" fill="#86694a" opacity="0.60"/><rect x="354.6" y="167.3" width="5.0" height="5.7" fill="#36481f" opacity="0.70"/><rect x="391.1" y="58.6" width="4.3" height="7.1" fill="#4a6a2c" opacity="0.49"/><rect x="98.7" y="177.4" width="5.0" height="7.2" fill="#4a6a2c" opacity="0.80"/><rect x="395.7" y="170.8" width="6.6" height="4.4" fill="#77603a" opacity="0.61"/><rect x="-1.1" y="103.1" width="6.3" height="3.1" fill="#50642e" opacity="0.47"/><rect x="7.4" y="252.5" width="4.9" height="4.2" fill="#3b5226" opacity="0.92"/><rect x="258.5" y="154.7" width="3.8" height="2.6" fill="#4a6a2c" opacity="0.83"/><rect x="226.6" y="58.3" width="3.7" height="6.1" fill="#7c6241" opacity="0.72"/><rect x="387.9" y="29.9" width="5.0" height="3.6" fill="#36481f" opacity="0.76"/><rect x="300.3" y="194.6" width="7.2" height="2.8" fill="#3f5a28" opacity="0.48"/><rect x="108.9" y="156.6" width="8.3" height="3.7" fill="#4a6a2c" opacity="0.64"/><rect x="31.3" y="8.2" width="8.0" height="5.5" fill="#a08258" opacity="0.47"/><rect x="41.9" y="70.8" width="3.7" height="3.1" fill="#8a7048" opacity="0.49"/><rect x="209.1" y="14.4" width="7.9" height="6.5" fill="#36481f" opacity="0.52"/><rect x="227.8" y="128.6" width="5.0" height="4.9" fill="#46602a" opacity="0.94"/><rect x="7.5" y="206.5" width="8.6" height="4.6" fill="#a08258" opacity="0.74"/><rect x="156.0" y="137.4" width="8.6" height="3.2" fill="#36481f" opacity="0.85"/><rect x="355.6" y="237.3" width="3.2" height="5.8" fill="#50642e" opacity="0.59"/><rect x="115.5" y="191.8" width="7.6" height="6.0" fill="#4a6a2c" opacity="0.54"/><rect x="156.5" y="218.6" width="7.5" height="3.1" fill="#7c6241" opacity="0.82"/><rect x="349.3" y="90.5" width="6.4" height="7.3" fill="#86694a" opacity="0.89"/><rect x="109.2" y="57.1" width="5.6" height="3.8" fill="#86694a" opacity="0.52"/><rect x="160.7" y="143.2" width="3.4" height="6.4" fill="#46602a" opacity="0.67"/><rect x="232.1" y="50.4" width="8.7" height="4.4" fill="#50642e" opacity="0.67"/><rect x="345.7" y="253.6" width="4.2" height="4.3" fill="#77603a" opacity="0.75"/><rect x="217.2" y="64.6" width="5.0" height="5.5" fill="#77603a" opacity="0.45"/><rect x="-3.6" y="-3.5" width="4.6" height="3.9" fill="#55502c" opacity="0.77"/><rect x="22.6" y="182.9" width="4.0" height="4.9" fill="#77603a" opacity="0.68"/><rect x="189.5" y="171.5" width="4.2" height="5.3" fill="#8a7048" opacity="0.61"/><rect x="298.6" y="116.8" width="7.0" height="3.3" fill="#a08258" opacity="0.78"/><rect x="387.1" y="28.8" width="6.4" height="5.9" fill="#36481f" opacity="0.66"/><rect x="70.8" y="186.7" width="6.2" height="5.9" fill="#4a6a2c" opacity="0.48"/><rect x="36.1" y="5.3" width="5.5" height="6.6" fill="#4a6a2c" opacity="0.58"/><rect x="181.9" y="214.3" width="8.6" height="2.8" fill="#4a6a2c" opacity="0.46"/><rect x="89.6" y="3.8" width="3.6" height="2.8" fill="#55502c" opacity="0.62"/><rect x="34.0" y="178.9" width="8.1" height="7.1" fill="#927650" opacity="0.79"/><rect x="293.2" y="226.7" width="6.1" height="5.4" fill="#3f5a28" opacity="0.48"/><rect x="216.1" y="81.3" width="5.4" height="3.9" fill="#36481f" opacity="0.68"/><rect x="0.4" y="120.3" width="4.2" height="5.5" fill="#55502c" opacity="0.53"/><rect x="104.6" y="136.7" width="4.8" height="4.3" fill="#7c6241" opacity="0.95"/><rect x="319.4" y="71.7" width="5.5" height="5.0" fill="#a08258" opacity="0.59"/><rect x="388.0" y="174.9" width="8.5" height="5.9" fill="#3f5a28" opacity="0.63"/><rect x="403.8" y="8.1" width="5.1" height="2.9" fill="#4a6a2c" opacity="0.93"/><rect x="177.2" y="144.5" width="3.1" height="3.7" fill="#3b5226" opacity="0.67"/><rect x="116.4" y="92.0" width="8.3" height="3.6" fill="#46602a" opacity="0.45"/><rect x="64.9" y="33.1" width="3.6" height="3.1" fill="#77603a" opacity="0.82"/><rect x="227.1" y="36.4" width="4.7" height="3.4" fill="#46602a" opacity="0.59"/><rect x="15.8" y="180.0" width="5.3" height="2.9" fill="#55502c" opacity="0.47"/><rect x="262.0" y="118.7" width="8.4" height="6.5" fill="#8a7048" opacity="0.86"/><rect x="367.8" y="42.6" width="5.7" height="4.0" fill="#36481f" opacity="0.55"/><rect x="258.5" y="15.2" width="8.5" height="7.2" fill="#86694a" opacity="0.54"/><rect x="20.7" y="104.8" width="8.5" height="7.4" fill="#3f5a28" opacity="0.70"/><rect x="53.1" y="138.6" width="8.7" height="6.8" fill="#8a7048" opacity="0.54"/><rect x="206.9" y="224.3" width="6.4" height="3.8" fill="#8a7048" opacity="0.62"/><rect x="167.4" y="177.8" width="7.2" height="4.8" fill="#7c6241" opacity="0.70"/><rect x="90.3" y="59.5" width="5.2" height="6.7" fill="#6d6637" opacity="0.63"/><rect x="146.5" y="41.9" width="8.8" height="5.5" fill="#3b5226" opacity="0.49"/><rect x="202.3" y="131.4" width="8.9" height="6.6" fill="#a08258" opacity="0.89"/><rect x="391.6" y="102.2" width="6.7" height="4.4" fill="#36481f" opacity="0.84"/><rect x="46.3" y="61.3" width="5.5" height="5.3" fill="#50642e" opacity="0.85"/><rect x="271.9" y="216.2" width="5.0" height="5.7" fill="#50642e" opacity="0.64"/><rect x="228.1" y="249.0" width="3.6" height="7.1" fill="#86694a" opacity="0.64"/><rect x="43.8" y="33.1" width="6.6" height="7.0" fill="#7c6241" opacity="0.72"/><rect x="313.2" y="123.8" width="3.1" height="2.8" fill="#77603a" opacity="0.69"/><rect x="78.3" y="71.9" width="5.3" height="3.9" fill="#77603a" opacity="0.69"/><rect x="81.5" y="144.7" width="7.6" height="5.0" fill="#46602a" opacity="0.51"/><rect x="27.6" y="202.8" width="6.4" height="2.6" fill="#6d6637" opacity="0.68"/><rect x="195.0" y="79.2" width="5.9" height="4.7" fill="#50642e" opacity="0.94"/><rect x="142.8" y="236.8" width="8.1" height="5.4" fill="#3b5226" opacity="0.62"/><rect x="252.8" y="42.0" width="6.8" height="5.0" fill="#3b5226" opacity="0.66"/><rect x="59.8" y="254.9" width="6.3" height="7.0" fill="#7c6241" opacity="0.83"/><rect x="259.5" y="119.4" width="7.6" height="5.8" fill="#3b5226" opacity="0.71"/><rect x="351.5" y="206.3" width="7.3" height="7.0" fill="#86694a" opacity="0.73"/><rect x="317.8" y="211.4" width="3.1" height="3.2" fill="#46602a" opacity="0.88"/><rect x="388.6" y="199.1" width="3.2" height="3.2" fill="#3b5226" opacity="0.73"/><rect x="110.0" y="199.2" width="4.7" height="6.7" fill="#a08258" opacity="0.66"/><rect x="196.9" y="94.7" width="8.4" height="3.6" fill="#927650" opacity="0.58"/><rect x="309.7" y="150.2" width="6.8" height="4.6" fill="#55502c" opacity="0.78"/><rect x="170.6" y="6.9" width="2.9" height="4.8" fill="#55502c" opacity="0.52"/><rect x="76.6" y="135.1" width="6.3" height="2.5" fill="#8a7048" opacity="0.87"/><rect x="151.0" y="37.5" width="7.9" height="7.4" fill="#3b5226" opacity="0.80"/><rect x="352.0" y="125.1" width="6.3" height="5.7" fill="#927650" opacity="0.53"/><rect x="90.4" y="230.9" width="8.4" height="4.9" fill="#3b5226" opacity="0.90"/><rect x="33.1" y="70.3" width="8.0" height="5.2" fill="#927650" opacity="0.67"/><rect x="182.4" y="118.1" width="4.9" height="4.8" fill="#4a6a2c" opacity="0.93"/><rect x="353.4" y="249.6" width="7.0" height="3.3" fill="#55502c" opacity="0.64"/><rect x="142.6" y="4.5" width="3.0" height="4.6" fill="#8a7048" opacity="0.87"/><rect x="8.3" y="78.7" width="4.9" height="4.1" fill="#3b5226" opacity="0.48"/><rect x="276.1" y="157.4" width="4.7" height="3.4" fill="#927650" opacity="0.46"/><rect x="308.3" y="56.2" width="7.2" height="6.5" fill="#7c6241" opacity="0.55"/><rect x="150.4" y="118.7" width="3.1" height="6.7" fill="#46602a" opacity="0.68"/><rect x="140.9" y="119.1" width="7.7" height="3.8" fill="#a08258" opacity="0.48"/><rect x="117.6" y="85.6" width="6.0" height="3.0" fill="#3f5a28" opacity="0.95"/><rect x="77.8" y="206.0" width="3.3" height="4.0" fill="#6d6637" opacity="0.49"/><rect x="235.6" y="79.3" width="3.1" height="4.6" fill="#a08258" opacity="0.70"/><rect x="16.7" y="70.6" width="4.4" height="4.6" fill="#7c6241" opacity="0.75"/><rect x="330.4" y="14.6" width="4.1" height="6.2" fill="#927650" opacity="0.67"/><rect x="200.0" y="198.3" width="4.5" height="3.9" fill="#50642e" opacity="0.65"/><rect x="226.5" y="71.9" width="2.6" height="5.9" fill="#927650" opacity="0.74"/><rect x="320.9" y="20.2" width="6.5" height="2.5" fill="#a08258" opacity="0.60"/><rect x="42.9" y="3.7" width="5.6" height="2.6" fill="#46602a" opacity="0.63"/><rect x="177.0" y="133.2" width="2.7" height="3.0" fill="#a08258" opacity="0.87"/><rect x="262.7" y="21.3" width="5.0" height="3.8" fill="#36481f" opacity="0.85"/><rect x="337.0" y="229.3" width="7.2" height="5.9" fill="#6d6637" opacity="0.93"/><rect x="362.1" y="214.3" width="5.9" height="7.4" fill="#46602a" opacity="0.87"/><rect x="333.2" y="136.2" width="6.1" height="6.9" fill="#86694a" opacity="0.69"/><rect x="149.2" y="243.5" width="3.6" height="5.3" fill="#3b5226" opacity="0.90"/><rect x="306.1" y="25.4" width="6.6" height="6.6" fill="#36481f" opacity="0.45"/><rect x="87.6" y="187.4" width="8.2" height="6.4" fill="#50642e" opacity="0.93"/><rect x="163.0" y="116.5" width="8.5" height="5.4" fill="#77603a" opacity="0.71"/><rect x="9.7" y="121.2" width="4.7" height="3.0" fill="#36481f" opacity="0.92"/><rect x="46.6" y="112.3" width="4.3" height="5.9" fill="#7c6241" opacity="0.54"/><rect x="152.8" y="130.4" width="5.9" height="3.2" fill="#50642e" opacity="0.92"/><rect x="376.0" y="232.8" width="7.9" height="3.6" fill="#8a7048" opacity="0.55"/><rect x="368.6" y="121.9" width="7.1" height="5.8" fill="#50642e" opacity="0.61"/><rect x="3.9" y="19.7" width="3.9" height="6.2" fill="#3f5a28" opacity="0.92"/><rect x="264.6" y="22.0" width="3.3" height="2.9" fill="#3f5a28" opacity="0.58"/><rect x="37.8" y="248.3" width="8.8" height="6.1" fill="#6d6637" opacity="0.51"/><rect x="139.3" y="233.2" width="7.5" height="7.3" fill="#86694a" opacity="0.78"/><rect x="128.3" y="162.9" width="3.5" height="7.4" fill="#8a7048" opacity="0.54"/><rect x="299.6" y="26.2" width="2.7" height="6.0" fill="#36481f" opacity="0.87"/><rect x="331.0" y="143.9" width="3.0" height="6.2" fill="#3f5a28" opacity="0.82"/><rect x="20.0" y="98.6" width="5.8" height="6.3" fill="#46602a" opacity="0.90"/><rect x="400.2" y="112.7" width="6.9" height="5.8" fill="#77603a" opacity="0.67"/><rect x="20.1" y="253.1" width="7.4" height="4.4" fill="#77603a" opacity="0.85"/><rect x="184.6" y="49.5" width="5.4" height="5.9" fill="#55502c" opacity="0.81"/><rect x="59.8" y="253.6" width="8.5" height="6.7" fill="#3b5226" opacity="0.56"/><rect x="165.6" y="177.4" width="8.4" height="5.9" fill="#46602a" opacity="0.79"/><rect x="284.1" y="41.3" width="4.5" height="3.4" fill="#7c6241" opacity="0.62"/><rect x="25.1" y="169.3" width="2.9" height="5.9" fill="#46602a" opacity="0.78"/><rect x="243.3" y="206.9" width="8.7" height="6.6" fill="#6d6637" opacity="0.68"/><rect x="2.0" y="156.3" width="6.7" height="6.8" fill="#86694a" opacity="0.63"/><rect x="21.4" y="164.3" width="4.6" height="5.0" fill="#6d6637" opacity="0.75"/><rect x="343.9" y="197.6" width="8.9" height="4.8" fill="#4a6a2c" opacity="0.65"/><rect x="0.6" y="81.0" width="4.8" height="7.5" fill="#36481f" opacity="0.61"/><rect x="22.4" y="224.5" width="6.2" height="6.2" fill="#77603a" opacity="0.51"/><rect x="240.0" y="106.4" width="7.7" height="4.2" fill="#4a6a2c" opacity="0.55"/><rect x="212.6" y="55.1" width="2.6" height="4.0" fill="#77603a" opacity="0.60"/><rect x="195.3" y="132.8" width="4.2" height="5.2" fill="#7c6241" opacity="0.65"/><rect x="360.7" y="244.5" width="7.5" height="6.5" fill="#86694a" opacity="0.52"/><rect x="122.7" y="94.5" width="4.8" height="3.7" fill="#7c6241" opacity="0.87"/><rect x="399.6" y="198.3" width="3.5" height="5.3" fill="#86694a" opacity="0.67"/><rect x="185.1" y="96.0" width="4.5" height="7.3" fill="#46602a" opacity="0.94"/><rect x="153.0" y="14.3" width="6.8" height="3.8" fill="#8a7048" opacity="0.54"/><rect x="181.2" y="107.6" width="8.0" height="7.4" fill="#55502c" opacity="0.95"/><rect x="358.7" y="236.5" width="4.1" height="6.6" fill="#7c6241" opacity="0.75"/><rect x="326.6" y="121.9" width="5.8" height="5.9" fill="#8a7048" opacity="0.81"/><rect x="211.1" y="-3.7" width="7.7" height="2.8" fill="#a08258" opacity="0.86"/><rect x="198.5" y="112.5" width="2.7" height="6.0" fill="#46602a" opacity="0.77"/><rect x="-2.3" y="118.0" width="9.0" height="4.1" fill="#3b5226" opacity="0.80"/><rect x="130.3" y="197.4" width="6.3" height="4.6" fill="#55502c" opacity="0.87"/><rect x="348.3" y="175.6" width="4.4" height="2.9" fill="#36481f" opacity="0.63"/><rect x="73.6" y="-3.6" width="8.8" height="6.3" fill="#a08258" opacity="0.74"/><rect x="21.5" y="38.6" width="2.8" height="5.6" fill="#86694a" opacity="0.64"/><rect x="402.4" y="66.9" width="3.0" height="2.6" fill="#3f5a28" opacity="0.46"/><rect x="197.4" y="105.6" width="4.9" height="7.3" fill="#927650" opacity="0.60"/><rect x="72.9" y="108.3" width="5.5" height="4.3" fill="#86694a" opacity="0.89"/><rect x="16.5" y="179.2" width="4.0" height="5.9" fill="#3f5a28" opacity="0.85"/><rect x="78.7" y="73.1" width="5.8" height="5.0" fill="#7c6241" opacity="0.91"/><rect x="216.8" y="9.4" width="4.9" height="7.1" fill="#7c6241" opacity="0.54"/><rect x="274.5" y="-3.4" width="8.5" height="6.8" fill="#3f5a28" opacity="0.63"/><rect x="79.1" y="109.1" width="6.5" height="5.8" fill="#7c6241" opacity="0.63"/><rect x="117.8" y="28.7" width="3.1" height="6.2" fill="#6d6637" opacity="0.86"/><rect x="95.6" y="98.6" width="7.7" height="2.5" fill="#55502c" opacity="0.64"/><rect x="94.4" y="113.2" width="3.4" height="4.9" fill="#8a7048" opacity="0.51"/><rect x="342.8" y="54.3" width="8.9" height="5.0" fill="#927650" opacity="0.66"/><rect x="16.4" y="27.5" width="8.6" height="6.7" fill="#77603a" opacity="0.64"/><rect x="397.6" y="40.4" width="7.2" height="7.2" fill="#8a7048" opacity="0.95"/><rect x="94.8" y="118.9" width="4.8" height="6.7" fill="#3f5a28" opacity="0.69"/><rect x="42.7" y="163.7" width="3.4" height="3.2" fill="#86694a" opacity="0.58"/><rect x="365.6" y="256.9" width="6.4" height="5.4" fill="#6d6637" opacity="0.52"/><rect x="196.4" y="3.4" width="8.1" height="5.9" fill="#a08258" opacity="0.78"/><rect x="357.7" y="44.8" width="5.7" height="6.1" fill="#3f5a28" opacity="0.56"/><rect x="136.9" y="10.7" width="7.5" height="4.9" fill="#3b5226" opacity="0.59"/><rect x="171.9" y="222.1" width="8.8" height="6.3" fill="#a08258" opacity="0.91"/><rect x="106.8" y="157.0" width="2.9" height="5.9" fill="#86694a" opacity="0.70"/><rect x="55.5" y="144.6" width="2.9" height="4.8" fill="#7c6241" opacity="0.83"/><rect x="191.8" y="50.4" width="3.1" height="4.4" fill="#55502c" opacity="0.67"/><rect x="18.4" y="201.9" width="6.2" height="4.5" fill="#3b5226" opacity="0.79"/><rect x="290.0" y="31.8" width="5.8" height="5.8" fill="#7c6241" opacity="0.52"/><rect x="333.5" y="155.2" width="8.1" height="5.3" fill="#3b5226" opacity="0.86"/><rect x="369.9" y="156.5" width="8.6" height="5.4" fill="#55502c" opacity="0.47"/><rect x="77.5" y="108.6" width="8.0" height="7.2" fill="#86694a" opacity="0.48"/><rect x="60.7" y="52.8" width="4.7" height="6.7" fill="#55502c" opacity="0.55"/><rect x="79.6" y="0.1" width="2.7" height="6.5" fill="#3f5a28" opacity="0.65"/><rect x="259.9" y="87.6" width="4.7" height="3.4" fill="#8a7048" opacity="0.91"/><rect x="300.8" y="69.1" width="6.4" height="3.9" fill="#a08258" opacity="0.55"/><rect x="299.2" y="207.5" width="3.9" height="5.3" fill="#3b5226" opacity="0.93"/><rect x="233.5" y="63.1" width="6.7" height="4.1" fill="#7c6241" opacity="0.84"/><rect x="233.5" y="60.7" width="2.9" height="3.5" fill="#4a6a2c" opacity="0.52"/><rect x="304.0" y="67.3" width="4.9" height="7.2" fill="#3f5a28" opacity="0.76"/><rect x="292.1" y="41.1" width="6.3" height="3.7" fill="#8a7048" opacity="0.74"/><rect x="128.1" y="95.0" width="6.2" height="3.7" fill="#4a6a2c" opacity="0.65"/><rect x="63.8" y="223.7" width="6.8" height="3.7" fill="#7c6241" opacity="0.67"/><rect x="341.4" y="138.8" width="5.9" height="5.5" fill="#55502c" opacity="0.47"/><rect x="66.1" y="201.3" width="6.4" height="4.0" fill="#86694a" opacity="0.67"/><rect x="357.7" y="243.1" width="4.4" height="5.4" fill="#55502c" opacity="0.91"/><rect x="188.2" y="245.7" width="6.5" height="6.0" fill="#4a6a2c" opacity="0.59"/><rect x="78.9" y="46.5" width="3.0" height="5.1" fill="#3b5226" opacity="0.74"/><rect x="275.3" y="203.6" width="7.6" height="4.9" fill="#3b5226" opacity="0.60"/><rect x="185.3" y="175.7" width="3.9" height="6.2" fill="#86694a" opacity="0.92"/><rect x="118.2" y="66.3" width="7.4" height="3.5" fill="#50642e" opacity="0.64"/><rect x="172.4" y="187.7" width="7.2" height="3.4" fill="#3b5226" opacity="0.94"/><rect x="198.2" y="255.8" width="6.5" height="4.4" fill="#7c6241" opacity="0.51"/><rect x="125.3" y="192.5" width="8.0" height="3.6" fill="#a08258" opacity="0.67"/><rect x="298.8" y="153.6" width="6.6" height="5.2" fill="#4a6a2c" opacity="0.87"/><rect x="105.6" y="220.5" width="6.1" height="2.7" fill="#6d6637" opacity="0.93"/><rect x="192.2" y="39.4" width="5.8" height="4.3" fill="#3b5226" opacity="0.46"/><rect x="58.7" y="207.6" width="3.7" height="5.3" fill="#8a7048" opacity="0.95"/><rect x="32.2" y="220.2" width="2.5" height="7.4" fill="#6d6637" opacity="0.49"/><rect x="316.4" y="249.6" width="8.1" height="4.3" fill="#50642e" opacity="0.88"/><rect x="42.5" y="136.7" width="5.6" height="5.3" fill="#a08258" opacity="0.73"/><rect x="169.3" y="45.2" width="8.9" height="5.9" fill="#927650" opacity="0.72"/><rect x="349.9" y="8.1" width="6.7" height="4.9" fill="#50642e" opacity="0.70"/><rect x="176.8" y="50.5" width="4.0" height="4.3" fill="#50642e" opacity="0.68"/><rect x="256.3" y="161.8" width="8.6" height="3.4" fill="#86694a" opacity="0.94"/><rect x="218.9" y="83.4" width="4.2" height="6.1" fill="#36481f" opacity="0.70"/><rect x="401.1" y="154.6" width="6.5" height="4.4" fill="#6d6637" opacity="0.65"/><rect x="168.5" y="33.6" width="8.4" height="4.7" fill="#8a7048" opacity="0.92"/><rect x="299.1" y="20.1" width="8.9" height="2.6" fill="#46602a" opacity="0.89"/><rect x="366.4" y="249.0" width="7.6" height="7.1" fill="#7c6241" opacity="0.87"/><rect x="4.1" y="39.2" width="2.6" height="2.8" fill="#927650" opacity="0.69"/><rect x="331.0" y="157.0" width="7.2" height="3.7" fill="#7c6241" opacity="0.91"/><rect x="270.7" y="58.6" width="4.9" height="4.9" fill="#7c6241" opacity="0.66"/><rect x="170.5" y="54.5" width="3.5" height="6.3" fill="#6d6637" opacity="0.59"/><rect x="235.7" y="19.9" width="4.1" height="3.4" fill="#55502c" opacity="0.65"/><rect x="37.5" y="-1.1" width="8.6" height="3.8" fill="#46602a" opacity="0.62"/><rect x="402.5" y="114.8" width="5.8" height="3.4" fill="#7c6241" opacity="0.82"/><rect x="400.3" y="219.2" width="3.2" height="2.7" fill="#46602a" opacity="0.55"/><rect x="103.4" y="196.2" width="5.4" height="3.2" fill="#4a6a2c" opacity="0.88"/><rect x="222.2" y="56.6" width="7.2" height="3.5" fill="#a08258" opacity="0.87"/><rect x="316.5" y="60.8" width="7.6" height="3.0" fill="#3b5226" opacity="0.49"/><rect x="86.9" y="158.9" width="4.1" height="2.5" fill="#927650" opacity="0.67"/><rect x="328.8" y="242.6" width="5.4" height="6.3" fill="#6d6637" opacity="0.94"/><rect x="103.6" y="101.7" width="7.5" height="4.1" fill="#36481f" opacity="0.61"/><rect x="210.3" y="89.0" width="5.0" height="6.4" fill="#46602a" opacity="0.85"/><rect x="118.4" y="212.4" width="5.5" height="5.4" fill="#36481f" opacity="0.46"/><rect x="126.3" y="131.9" width="7.1" height="5.2" fill="#55502c" opacity="0.84"/><rect x="220.8" y="23.4" width="5.7" height="3.8" fill="#50642e" opacity="0.66"/><rect x="239.0" y="16.5" width="4.8" height="5.4" fill="#7c6241" opacity="0.65"/><rect x="341.0" y="191.7" width="3.4" height="5.3" fill="#50642e" opacity="0.63"/><rect x="1.2" y="187.6" width="6.8" height="2.7" fill="#a08258" opacity="0.68"/><rect x="179.9" y="1.1" width="5.8" height="6.5" fill="#6d6637" opacity="0.70"/><rect x="322.6" y="153.5" width="5.9" height="3.4" fill="#7c6241" opacity="0.83"/><rect x="113.3" y="201.8" width="5.7" height="4.6" fill="#4a6a2c" opacity="0.73"/><rect x="259.4" y="103.3" width="8.0" height="5.2" fill="#8a7048" opacity="0.94"/><rect x="333.7" y="197.5" width="7.0" height="5.3" fill="#8a7048" opacity="0.74"/><rect x="24.3" y="71.0" width="6.6" height="3.3" fill="#36481f" opacity="0.75"/><rect x="171.1" y="58.5" width="4.5" height="6.0" fill="#3b5226" opacity="0.61"/><rect x="124.0" y="112.9" width="5.3" height="5.7" fill="#a08258" opacity="0.46"/><rect x="221.8" y="228.4" width="6.3" height="4.5" fill="#4a6a2c" opacity="0.67"/><rect x="261.8" y="77.9" width="7.9" height="4.6" fill="#55502c" opacity="0.85"/><rect x="171.1" y="69.4" width="7.8" height="5.8" fill="#55502c" opacity="0.93"/><rect x="51.9" y="231.6" width="8.8" height="6.5" fill="#50642e" opacity="0.85"/><rect x="263.1" y="36.4" width="8.6" height="4.2" fill="#4a6a2c" opacity="0.79"/><rect x="332.1" y="213.6" width="3.7" height="5.0" fill="#7c6241" opacity="0.83"/><rect x="87.9" y="82.9" width="7.3" height="5.8" fill="#3b5226" opacity="0.68"/><rect x="308.9" y="252.8" width="6.4" height="5.8" fill="#86694a" opacity="0.66"/><rect x="378.2" y="184.6" width="6.2" height="6.9" fill="#3b5226" opacity="0.71"/><rect x="301.6" y="12.7" width="8.1" height="4.3" fill="#6d6637" opacity="0.47"/><rect x="381.3" y="118.0" width="3.8" height="6.3" fill="#4a6a2c" opacity="0.52"/><rect x="240.1" y="65.7" width="6.3" height="3.7" fill="#46602a" opacity="0.63"/><rect x="232.9" y="34.9" width="4.1" height="3.1" fill="#46602a" opacity="0.77"/><rect x="181.4" y="179.4" width="7.8" height="3.2" fill="#927650" opacity="0.78"/><rect x="112.8" y="230.6" width="4.8" height="6.7" fill="#8a7048" opacity="0.55"/><rect x="172.7" y="100.9" width="3.1" height="3.0" fill="#50642e" opacity="0.64"/><rect x="150.4" y="83.4" width="4.9" height="3.3" fill="#36481f" opacity="0.78"/><rect x="114.4" y="200.9" width="4.2" height="3.4" fill="#8a7048" opacity="0.89"/><rect x="283.9" y="215.5" width="8.4" height="7.2" fill="#36481f" opacity="0.53"/><rect x="183.1" y="3.2" width="6.2" height="4.5" fill="#927650" opacity="0.45"/><rect x="303.7" y="15.4" width="5.2" height="4.9" fill="#3f5a28" opacity="0.48"/><rect x="29.0" y="240.0" width="4.6" height="5.9" fill="#3b5226" opacity="0.66"/><rect x="386.0" y="113.2" width="4.3" height="4.1" fill="#927650" opacity="0.62"/><rect x="95.1" y="135.6" width="6.9" height="7.2" fill="#7c6241" opacity="0.86"/><rect x="254.3" y="199.6" width="7.8" height="6.1" fill="#3f5a28" opacity="0.50"/><rect x="16.5" y="42.3" width="4.5" height="3.4" fill="#50642e" opacity="0.80"/><rect x="147.9" y="173.0" width="7.4" height="7.1" fill="#4a6a2c" opacity="0.50"/><rect x="293.1" y="16.7" width="3.4" height="5.0" fill="#50642e" opacity="0.67"/><rect x="206.1" y="175.7" width="4.5" height="3.9" fill="#77603a" opacity="0.86"/><rect x="154.9" y="211.8" width="3.2" height="4.7" fill="#55502c" opacity="0.89"/><rect x="286.3" y="114.9" width="8.0" height="3.8" fill="#36481f" opacity="0.72"/><rect x="295.0" y="153.0" width="5.6" height="3.4" fill="#4a6a2c" opacity="0.68"/><rect x="403.4" y="135.0" width="2.6" height="5.4" fill="#a08258" opacity="0.83"/><rect x="191.5" y="70.7" width="7.6" height="5.1" fill="#50642e" opacity="0.62"/><rect x="186.7" y="91.5" width="7.1" height="4.4" fill="#a08258" opacity="0.89"/><rect x="218.1" y="241.6" width="6.0" height="5.9" fill="#7c6241" opacity="0.74"/><rect x="320.6" y="159.8" width="3.1" height="7.0" fill="#6d6637" opacity="0.78"/><rect x="80.9" y="123.8" width="5.3" height="5.1" fill="#46602a" opacity="0.80"/><rect x="298.4" y="158.8" width="8.8" height="7.3" fill="#a08258" opacity="0.75"/><rect x="295.5" y="197.2" width="8.8" height="4.4" fill="#36481f" opacity="0.83"/><rect x="179.7" y="176.0" width="3.6" height="7.0" fill="#77603a" opacity="0.82"/><rect x="347.3" y="128.3" width="7.0" height="2.9" fill="#4a6a2c" opacity="0.47"/><rect x="326.2" y="200.8" width="4.4" height="2.7" fill="#3b5226" opacity="0.61"/><rect x="368.2" y="126.3" width="8.7" height="6.7" fill="#77603a" opacity="0.87"/><rect x="261.7" y="43.0" width="8.7" height="3.4" fill="#55502c" opacity="0.54"/><rect x="82.0" y="115.4" width="5.7" height="6.9" fill="#927650" opacity="0.47"/><rect x="259.4" y="169.9" width="4.1" height="7.3" fill="#36481f" opacity="0.91"/><rect x="54.5" y="27.1" width="6.0" height="7.3" fill="#77603a" opacity="0.82"/><rect x="121.7" y="14.2" width="7.3" height="6.2" fill="#86694a" opacity="0.48"/><rect x="70.9" y="73.6" width="2.7" height="5.9" fill="#3b5226" opacity="0.77"/><rect x="26.6" y="91.3" width="7.3" height="3.1" fill="#46602a" opacity="0.64"/><rect x="46.2" y="175.3" width="7.0" height="3.8" fill="#a08258" opacity="0.87"/><rect x="339.8" y="179.0" width="3.8" height="6.3" fill="#46602a" opacity="0.87"/><rect x="378.4" y="251.4" width="8.0" height="6.2" fill="#36481f" opacity="0.82"/><rect x="307.0" y="65.9" width="3.0" height="6.8" fill="#50642e" opacity="0.90"/><rect x="226.9" y="18.2" width="7.3" height="5.7" fill="#3f5a28" opacity="0.87"/><rect x="178.3" y="118.2" width="2.5" height="4.6" fill="#3b5226" opacity="0.77"/><rect x="317.6" y="149.4" width="8.6" height="3.9" fill="#6d6637" opacity="0.89"/><rect x="137.2" y="3.5" width="6.4" height="5.6" fill="#4a6a2c" opacity="0.73"/><rect x="291.4" y="194.2" width="3.6" height="5.8" fill="#6d6637" opacity="0.93"/><rect x="343.8" y="249.5" width="8.5" height="3.9" fill="#7c6241" opacity="0.61"/><rect x="18.5" y="201.5" width="7.4" height="6.7" fill="#a08258" opacity="0.87"/><rect x="260.4" y="245.7" width="2.7" height="4.9" fill="#3f5a28" opacity="0.55"/><rect x="1.9" y="113.8" width="2.8" height="2.6" fill="#86694a" opacity="0.76"/><rect x="216.5" y="254.4" width="5.7" height="4.7" fill="#7c6241" opacity="0.60"/><rect x="87.0" y="36.7" width="5.6" height="4.3" fill="#86694a" opacity="0.95"/><rect x="396.4" y="46.3" width="5.3" height="4.4" fill="#8a7048" opacity="0.92"/><rect x="202.4" y="94.3" width="6.6" height="5.6" fill="#a08258" opacity="0.94"/><rect x="319.3" y="89.6" width="4.2" height="5.6" fill="#3b5226" opacity="0.94"/><rect x="370.8" y="171.7" width="8.7" height="6.3" fill="#55502c" opacity="0.85"/><rect x="212.9" y="84.9" width="4.6" height="2.8" fill="#7c6241" opacity="0.64"/><rect x="127.9" y="146.4" width="5.3" height="4.0" fill="#55502c" opacity="0.84"/><rect x="180.9" y="248.8" width="3.0" height="4.9" fill="#4a6a2c" opacity="0.59"/><rect x="383.8" y="254.4" width="3.1" height="5.6" fill="#4a6a2c" opacity="0.49"/><rect x="31.3" y="201.9" width="8.6" height="7.1" fill="#55502c" opacity="0.63"/><rect x="115.1" y="28.0" width="3.0" height="3.6" fill="#6d6637" opacity="0.73"/><rect x="65.7" y="33.3" width="3.0" height="4.7" fill="#50642e" opacity="0.81"/><rect x="247.2" y="100.4" width="3.3" height="2.9" fill="#6d6637" opacity="0.91"/><rect x="85.6" y="151.3" width="6.3" height="4.5" fill="#927650" opacity="0.84"/><rect x="223.9" y="241.9" width="2.6" height="4.9" fill="#77603a" opacity="0.49"/><rect x="168.7" y="88.1" width="8.6" height="5.6" fill="#8a7048" opacity="0.64"/><rect x="54.9" y="187.5" width="4.8" height="4.1" fill="#36481f" opacity="0.70"/><rect x="215.5" y="51.6" width="6.3" height="4.1" fill="#77603a" opacity="0.90"/><rect x="192.4" y="151.7" width="3.4" height="4.5" fill="#4a6a2c" opacity="0.47"/><rect x="258.8" y="108.5" width="7.0" height="7.2" fill="#4a6a2c" opacity="0.68"/><rect x="388.3" y="44.8" width="3.7" height="5.2" fill="#4a6a2c" opacity="0.76"/><rect x="230.2" y="-3.6" width="3.7" height="5.5" fill="#55502c" opacity="0.80"/><rect x="350.3" y="206.4" width="8.1" height="3.6" fill="#50642e" opacity="0.79"/><rect x="225.0" y="128.1" width="4.2" height="7.2" fill="#36481f" opacity="0.57"/><rect x="30.5" y="11.0" width="6.3" height="2.9" fill="#3b5226" opacity="0.93"/><rect x="55.7" y="248.1" width="6.6" height="2.5" fill="#36481f" opacity="0.66"/><rect x="69.7" y="196.8" width="7.9" height="4.9" fill="#46602a" opacity="0.67"/><rect x="192.5" y="56.5" width="8.5" height="6.9" fill="#6d6637" opacity="0.95"/><rect x="181.5" y="234.8" width="4.7" height="3.1" fill="#3b5226" opacity="0.82"/><rect x="139.3" y="41.2" width="5.2" height="3.1" fill="#77603a" opacity="0.47"/><rect x="191.0" y="203.9" width="2.8" height="5.1" fill="#7c6241" opacity="0.81"/><rect x="278.6" y="189.4" width="7.0" height="7.1" fill="#86694a" opacity="0.86"/><rect x="373.8" y="115.1" width="4.9" height="5.1" fill="#8a7048" opacity="0.55"/><rect x="200.5" y="77.3" width="7.1" height="5.7" fill="#46602a" opacity="0.61"/><rect x="68.2" y="204.7" width="5.7" height="6.1" fill="#927650" opacity="0.51"/><rect x="277.4" y="250.1" width="3.1" height="5.6" fill="#86694a" opacity="0.86"/><rect x="61.9" y="159.8" width="4.2" height="6.0" fill="#36481f" opacity="0.58"/><rect x="343.2" y="119.3" width="8.7" height="7.1" fill="#8a7048" opacity="0.47"/><rect x="149.9" y="150.5" width="7.6" height="5.5" fill="#3b5226" opacity="0.81"/><rect x="235.5" y="229.2" width="8.5" height="3.0" fill="#46602a" opacity="0.60"/><rect x="246.7" y="192.6" width="4.4" height="4.0" fill="#3b5226" opacity="0.85"/><rect x="394.4" y="20.5" width="6.6" height="6.2" fill="#55502c" opacity="0.81"/><rect x="110.3" y="22.3" width="3.6" height="3.8" fill="#86694a" opacity="0.76"/><rect x="146.9" y="11.7" width="5.0" height="4.8" fill="#8a7048" opacity="0.51"/><rect x="205.6" y="251.8" width="4.8" height="5.2" fill="#a08258" opacity="0.49"/><rect x="301.2" y="135.0" width="6.4" height="6.9" fill="#3b5226" opacity="0.70"/><rect x="379.7" y="12.0" width="3.0" height="5.7" fill="#3f5a28" opacity="0.52"/><rect x="72.9" y="116.1" width="7.6" height="5.3" fill="#4a6a2c" opacity="0.72"/><rect x="240.3" y="16.8" width="4.6" height="5.9" fill="#7c6241" opacity="0.48"/><rect x="70.3" y="237.8" width="6.2" height="5.4" fill="#46602a" opacity="0.77"/><rect x="385.1" y="161.5" width="8.5" height="3.1" fill="#86694a" opacity="0.80"/><rect x="72.8" y="192.3" width="8.0" height="6.7" fill="#3b5226" opacity="0.93"/><rect x="52.0" y="110.2" width="3.1" height="5.3" fill="#8a7048" opacity="0.46"/><rect x="341.0" y="164.7" width="5.2" height="5.4" fill="#7c6241" opacity="0.58"/><rect x="208.2" y="10.9" width="7.5" height="6.1" fill="#7c6241" opacity="0.95"/><rect x="160.6" y="15.9" width="5.9" height="2.8" fill="#6d6637" opacity="0.71"/><rect x="178.4" y="218.4" width="5.1" height="6.3" fill="#55502c" opacity="0.55"/><rect x="297.0" y="91.9" width="3.9" height="3.5" fill="#36481f" opacity="0.69"/><rect x="257.5" y="156.8" width="3.9" height="3.6" fill="#3f5a28" opacity="0.58"/><rect x="163.0" y="185.1" width="3.0" height="4.8" fill="#50642e" opacity="0.50"/><rect x="7.2" y="3.4" width="4.7" height="4.4" fill="#8a7048" opacity="0.57"/><rect x="103.6" y="43.2" width="7.9" height="5.9" fill="#46602a" opacity="0.52"/><rect x="72.6" y="77.8" width="5.8" height="6.7" fill="#3f5a28" opacity="0.89"/><rect x="27.3" y="10.8" width="8.6" height="3.4" fill="#927650" opacity="0.45"/><rect x="139.0" y="29.4" width="8.2" height="3.6" fill="#927650" opacity="0.48"/><rect x="244.0" y="83.6" width="4.5" height="4.1" fill="#a08258" opacity="0.57"/><rect x="401.8" y="182.4" width="7.3" height="4.3" fill="#86694a" opacity="0.77"/><rect x="88.7" y="8.7" width="6.0" height="4.9" fill="#3f5a28" opacity="0.54"/><rect x="252.8" y="132.8" width="2.8" height="2.6" fill="#7c6241" opacity="0.47"/><rect x="80.8" y="246.2" width="7.7" height="6.2" fill="#4a6a2c" opacity="0.78"/><rect x="401.5" y="173.8" width="4.5" height="6.2" fill="#6d6637" opacity="0.69"/><rect x="210.7" y="235.7" width="7.9" height="4.5" fill="#3f5a28" opacity="0.57"/><rect x="370.7" y="186.1" width="7.3" height="6.4" fill="#4a6a2c" opacity="0.45"/><rect x="391.2" y="209.4" width="5.6" height="2.8" fill="#50642e" opacity="0.83"/><rect x="350.4" y="229.1" width="5.1" height="7.3" fill="#86694a" opacity="0.51"/><rect x="149.8" y="141.3" width="7.3" height="4.5" fill="#3f5a28" opacity="0.58"/><rect x="302.0" y="16.7" width="8.4" height="5.2" fill="#3b5226" opacity="0.63"/></g>
<rect width="404" height="257" filter="url(#nz)" opacity=".55"/>
<g filter="url(#b2)"><polygon points="90.0,91.5 110.0,85.5 132.0,89.5 140.0,99.5 128.0,109.5 112.0,119.5 94.0,121.5 82.0,109.5" fill="#7d775c" opacity=".55"/><polygon points="320.0,55.5 342.0,51.5 354.0,61.5 346.0,75.5 326.0,75.5 316.0,67.5" fill="#7d735e" opacity=".7"/></g>
<g filter="url(#b0)"><circle cx="352.5" cy="89.0" r="2.1" fill="#1f381c"/><circle cx="352.4" cy="93.5" r="2.7" fill="#1f381c"/><circle cx="353.1" cy="101.6" r="2.1" fill="#35562a"/><circle cx="353.4" cy="106.8" r="2.6" fill="#35562a"/><circle cx="353.0" cy="119.8" r="2.8" fill="#1f381c"/><circle cx="353.9" cy="150.6" r="2.1" fill="#24401f"/><circle cx="352.2" cy="156.2" r="2.2" fill="#2c4a22"/><circle cx="359.9" cy="81.3" r="2.6" fill="#1f381c"/><circle cx="359.8" cy="87.8" r="2.5" fill="#2c4a22"/><circle cx="359.0" cy="94.6" r="2.4" fill="#24401f"/><circle cx="359.2" cy="101.7" r="2.7" fill="#2c4a22"/><circle cx="360.4" cy="106.1" r="2.6" fill="#35562a"/><circle cx="359.9" cy="113.3" r="2.8" fill="#1f381c"/><circle cx="359.6" cy="118.5" r="2.5" fill="#1f381c"/><circle cx="359.1" cy="131.2" r="2.6" fill="#1f381c"/><circle cx="358.6" cy="143.8" r="2.4" fill="#2c4a22"/><circle cx="360.2" cy="149.6" r="2.2" fill="#1f381c"/><circle cx="365.0" cy="94.5" r="2.7" fill="#2c4a22"/><circle cx="366.3" cy="100.1" r="2.0" fill="#24401f"/><circle cx="366.3" cy="112.3" r="2.0" fill="#24401f"/><circle cx="366.7" cy="120.3" r="2.1" fill="#2c4a22"/><circle cx="364.8" cy="125.0" r="2.4" fill="#35562a"/><circle cx="366.7" cy="132.6" r="2.3" fill="#1f381c"/><circle cx="366.6" cy="138.8" r="2.7" fill="#24401f"/><circle cx="365.6" cy="144.2" r="2.5" fill="#24401f"/><circle cx="365.2" cy="150.6" r="2.3" fill="#35562a"/><circle cx="373.1" cy="69.6" r="2.0" fill="#1f381c"/><circle cx="372.5" cy="75.3" r="2.1" fill="#24401f"/><circle cx="372.0" cy="88.9" r="2.9" fill="#35562a"/><circle cx="372.7" cy="95.1" r="2.6" fill="#1f381c"/><circle cx="371.5" cy="99.8" r="2.7" fill="#2c4a22"/><circle cx="373.1" cy="119.3" r="2.4" fill="#24401f"/><circle cx="371.4" cy="125.9" r="2.8" fill="#35562a"/><circle cx="372.5" cy="132.3" r="2.1" fill="#24401f"/><circle cx="372.6" cy="143.2" r="2.6" fill="#24401f"/><circle cx="372.3" cy="150.3" r="2.3" fill="#35562a"/><circle cx="371.5" cy="156.0" r="2.0" fill="#24401f"/><circle cx="378.5" cy="62.7" r="2.1" fill="#2c4a22"/><circle cx="378.5" cy="81.9" r="2.5" fill="#1f381c"/><circle cx="378.4" cy="88.3" r="2.6" fill="#2c4a22"/><circle cx="379.3" cy="100.9" r="2.4" fill="#1f381c"/><circle cx="377.9" cy="106.7" r="2.5" fill="#2c4a22"/><circle cx="379.3" cy="112.5" r="2.5" fill="#2c4a22"/><circle cx="379.2" cy="118.4" r="2.9" fill="#1f381c"/><circle cx="378.5" cy="126.4" r="2.8" fill="#1f381c"/><circle cx="378.4" cy="137.8" r="2.9" fill="#24401f"/><circle cx="377.9" cy="143.5" r="2.5" fill="#35562a"/><circle cx="379.3" cy="151.2" r="2.2" fill="#24401f"/><circle cx="385.2" cy="63.4" r="2.9" fill="#1f381c"/><circle cx="385.0" cy="68.9" r="2.2" fill="#35562a"/><circle cx="385.1" cy="82.1" r="2.3" fill="#35562a"/><circle cx="384.6" cy="88.4" r="2.5" fill="#35562a"/><circle cx="384.0" cy="94.6" r="2.6" fill="#2c4a22"/><circle cx="384.7" cy="100.5" r="2.0" fill="#35562a"/><circle cx="384.3" cy="113.0" r="2.5" fill="#1f381c"/><circle cx="385.2" cy="119.1" r="2.7" fill="#2c4a22"/><circle cx="385.5" cy="126.2" r="2.5" fill="#1f381c"/><circle cx="384.8" cy="132.1" r="2.6" fill="#1f381c"/><circle cx="385.8" cy="137.9" r="2.6" fill="#24401f"/><circle cx="384.5" cy="156.1" r="2.8" fill="#24401f"/><circle cx="391.7" cy="64.0" r="2.4" fill="#24401f"/><circle cx="390.8" cy="70.2" r="2.8" fill="#24401f"/><circle cx="391.7" cy="75.9" r="2.6" fill="#35562a"/><circle cx="391.1" cy="81.5" r="2.5" fill="#2c4a22"/><circle cx="391.6" cy="88.9" r="2.6" fill="#35562a"/><circle cx="391.0" cy="94.0" r="2.1" fill="#24401f"/><circle cx="391.8" cy="100.2" r="2.3" fill="#35562a"/><circle cx="391.1" cy="113.7" r="2.1" fill="#35562a"/><circle cx="390.7" cy="120.1" r="2.5" fill="#2c4a22"/><circle cx="391.7" cy="125.1" r="2.5" fill="#24401f"/><circle cx="391.5" cy="131.4" r="2.4" fill="#24401f"/><circle cx="392.1" cy="137.9" r="2.2" fill="#1f381c"/><circle cx="390.9" cy="143.8" r="2.3" fill="#1f381c"/><circle cx="391.1" cy="155.7" r="2.1" fill="#24401f"/><circle cx="397.7" cy="62.9" r="2.1" fill="#1f381c"/><circle cx="398.1" cy="76.1" r="2.1" fill="#2c4a22"/><circle cx="396.9" cy="81.5" r="2.5" fill="#35562a"/><circle cx="398.7" cy="100.7" r="2.1" fill="#35562a"/><circle cx="397.1" cy="119.7" r="2.3" fill="#35562a"/><circle cx="398.4" cy="130.8" r="2.3" fill="#35562a"/><circle cx="397.6" cy="137.1" r="2.2" fill="#1f381c"/><circle cx="397.5" cy="144.0" r="2.8" fill="#1f381c"/><circle cx="397.8" cy="150.8" r="2.2" fill="#1f381c"/><circle cx="397.6" cy="157.0" r="2.5" fill="#35562a"/></g>
<path d="M34.500 0V257M201 0V257M0 56H404M0 183H404" stroke="#b0a88a" stroke-width="0.350" opacity=".5" transform="translate(0,0)"/><path d="M350 0V257" stroke="#b0a88a" stroke-width="0.350" opacity=".5"/><g filter="url(#b1)"><polygon points="342.0,45.5 332.0,51.5 324.0,55.5 310.0,55.5 298.0,48.5 280.0,43.5 265.0,46.5 250.0,53.5 232.0,60.5 220.0,63.5 202.0,68.5 180.0,83.5 160.0,91.5 144.0,95.5 132.0,101.5 120.0,111.5 112.0,119.5 106.0,129.5 120.0,131.5 132.0,121.5 146.0,111.5 164.0,103.5 182.0,95.5 204.0,83.5 222.0,75.5 242.0,69.5 260.0,63.5 272.0,59.5 284.0,59.5 300.0,65.5 316.0,67.5 330.0,63.5 342.0,57.5 348.0,53.5" fill="#24391f" /><polyline points="344.0,49.5 326.0,59.5 310.0,60.5 296.0,53.5 278.0,47.5 265.0,50.5 250.0,57.5 222.0,65.5 202.0,71.5 178.0,89.5 148.0,96.5 132.0,104.5 114.0,119.5 100.0,131.5" fill="none" stroke="#131f18" stroke-width="3.2" stroke-linejoin="round"/><polygon points="406.0,14.5 380.0,16.5 362.0,23.5 348.0,36.5 339.0,47.5 342.0,55.5 350.0,53.5 356.0,44.5 370.0,33.5 385.0,29.5 406.0,29.5" fill="#0c1720" /><polygon points="0.0,131.5 16.0,129.5 16.0,143.5 72.0,144.5 76.0,129.5 90.0,123.5 106.0,125.5 120.0,127.5 126.0,139.5 135.0,155.5 116.0,165.5 88.0,168.5 74.0,177.5 56.0,184.5 42.0,188.5 17.0,182.5 0.0,180.5" fill="#285226" /><polygon points="0.0,133.5 14.0,133.5 22.0,147.5 20.0,163.5 12.0,175.5 0.0,177.5" fill="#14341f" /><polygon points="60.0,113.5 82.0,109.5 102.0,115.5 106.0,129.5 90.0,137.5 66.0,133.5 56.0,123.5" fill="#27502a" /><polyline points="2.0,163.5 30.0,159.5 52.0,149.5 72.0,137.5 90.0,129.5 104.0,125.5" fill="none" stroke="#10231a" stroke-width="2.2" /><polyline points="10.0,179.5 40.0,171.5 66.0,155.5 92.0,147.5 106.0,133.5" fill="none" stroke="#16301e" stroke-width="1.4" /><polyline points="16.0,145.5 40.0,147.5 60.0,141.5" fill="none" stroke="#16301e" stroke-width="1.2" /><polygon points="18.0,127.5 70.0,127.5 70.0,140.5 40.0,143.5 20.0,139.5" fill="#55552f" /></g>
<g filter="url(#b0)"><polyline points="164.0,41.5 156.0,51.5 154.0,60.5 162.0,67.5 170.0,65.5 175.0,55.5 180.0,59.5 180.0,71.5 186.0,79.5" fill="none" stroke="#2a4222" stroke-width="2.2" stroke-linejoin="round"/></g>
<g filter="url(#b0)"><polyline points="322.0,127.5 310.0,145.5 292.0,171.5 276.0,195.5 267.0,209.5 269.0,229.5 270.0,245.5" fill="none" stroke="#33491f" stroke-width="1.1" /><polyline points="356.0,85.5 354.0,109.5 344.0,125.5 322.0,131.5" fill="none" stroke="#3a4a26" stroke-width="0.8" /></g>
<g filter="url(#b1)"><polygon points="276.0,58.5 288.0,58.5 288.0,73.5 276.0,73.5" fill="#1c2716" /><polygon points="140.0,109.5 168.0,103.5 200.0,91.5 220.0,83.5 240.0,75.5 260.0,69.5 268.0,75.5 260.0,91.5 240.0,101.5 220.0,109.5 200.0,117.5 176.0,127.5 152.0,133.5 136.0,129.5" fill="#38492a" opacity=".88"/><polygon points="282.0,127.5 288.0,133.5 280.0,145.5 270.0,157.5 260.0,165.5 254.0,159.5 266.0,147.5 274.0,135.5" fill="#26331c" /><polygon points="205.0,175.5 230.0,167.5 252.0,167.5 260.0,179.5 240.0,191.5 216.0,195.5 204.0,187.5" fill="#4a5230" opacity=".7"/><polygon points="202.0,209.5 224.0,205.5 232.0,219.5 216.0,227.5 202.0,223.5" fill="#3c4526" opacity=".7"/></g>
<g filter="url(#b1)"><polygon points="221.0,112.5 236.0,107.5 251.0,108.5 261.0,118.5 265.0,131.5 266.0,149.5 254.0,158.5 223.0,157.5 218.0,143.5 216.0,126.5" fill="#d9c29e" /><polygon points="226.0,117.5 245.0,113.5 256.0,125.5 258.0,142.5 246.0,152.5 229.0,150.5 223.0,135.5" fill="#e6d1b0" /><polygon points="90.0,171.5 120.0,167.5 150.0,171.5 180.0,169.5 210.0,171.5 224.0,181.5 216.0,195.5 190.0,199.5 162.0,199.5 140.0,203.5 122.0,207.5 104.0,199.5 93.0,190.5" fill="#958460" opacity=".85"/><polygon points="106.0,177.5 136.0,175.5 154.0,185.5 140.0,195.5 120.0,199.5 106.0,191.5" fill="#a3916a" opacity=".8"/><polygon points="72.0,215.5 90.0,213.5 98.0,225.5 86.0,231.5 76.0,229.5" fill="#948460" opacity=".85"/><polygon points="156.0,219.5 176.0,215.5 189.0,225.5 186.0,235.5 166.0,237.5 156.0,229.5" fill="#8f7f5c" opacity=".85"/><polygon points="176.0,137.5 194.0,133.5 208.0,139.5 210.0,151.5 194.0,157.5 178.0,151.5" fill="#7a6c48" opacity=".6"/><polygon points="140.0,145.5 160.0,141.5 168.0,153.5 156.0,161.5 142.0,157.5" fill="#75683f" opacity=".55"/><polygon points="180.0,163.5 202.0,159.5 212.0,169.5 204.0,179.5 184.0,179.5" fill="#8a7a52" opacity=".6"/></g>
<g filter="url(#b0)"><circle cx="251.0" cy="150.2" r="0.9" fill="#b39a78" opacity=".7"/><circle cx="252.3" cy="151.5" r="1.0" fill="#9a8462" opacity=".7"/><circle cx="242.3" cy="129.4" r="1.4" fill="#9a8462" opacity=".7"/><circle cx="246.3" cy="144.3" r="1.3" fill="#9a8462" opacity=".7"/><circle cx="253.8" cy="133.9" r="1.1" fill="#9a8462" opacity=".7"/><circle cx="254.1" cy="140.2" r="1.5" fill="#b39a78" opacity=".7"/><circle cx="242.9" cy="130.3" r="1.4" fill="#9a8462" opacity=".7"/><circle cx="225.3" cy="126.5" r="1.7" fill="#b39a78" opacity=".7"/><circle cx="231.4" cy="150.6" r="1.3" fill="#c4ac88" opacity=".7"/><circle cx="234.8" cy="136.0" r="0.9" fill="#c4ac88" opacity=".7"/><circle cx="243.5" cy="127.5" r="1.3" fill="#9a8462" opacity=".7"/><circle cx="258.6" cy="150.9" r="1.6" fill="#9a8462" opacity=".7"/><circle cx="236.1" cy="112.7" r="1.5" fill="#b39a78" opacity=".7"/><circle cx="246.1" cy="124.6" r="1.7" fill="#c4ac88" opacity=".7"/><circle cx="244.2" cy="124.3" r="1.5" fill="#9a8462" opacity=".7"/><circle cx="241.1" cy="134.9" r="1.0" fill="#b39a78" opacity=".7"/><circle cx="250.3" cy="123.1" r="1.4" fill="#9a8462" opacity=".7"/><circle cx="242.6" cy="116.8" r="1.3" fill="#9a8462" opacity=".7"/><circle cx="248.5" cy="148.7" r="1.1" fill="#c4ac88" opacity=".7"/><circle cx="223.8" cy="121.4" r="0.9" fill="#c4ac88" opacity=".7"/><circle cx="258.0" cy="152.2" r="1.2" fill="#9a8462" opacity=".7"/><circle cx="248.6" cy="135.1" r="1.6" fill="#c4ac88" opacity=".7"/><circle cx="254.2" cy="138.1" r="1.3" fill="#c4ac88" opacity=".7"/><circle cx="223.1" cy="112.4" r="1.5" fill="#c4ac88" opacity=".7"/><circle cx="228.0" cy="152.9" r="1.5" fill="#c4ac88" opacity=".7"/><circle cx="224.7" cy="125.6" r="1.7" fill="#b39a78" opacity=".7"/></g>
<rect width="404" height="257" filter="url(#nz2)" opacity=".5"/>
<polyline points="0.0,26.1 34.0,41.8 43.0,41.5 41.5,28.0 71.5,23.3 73.4,32.8 89.6,30.3 89.0,19.5 93.4,17.5 92.0,4.5 95.7,4.5 96.0,9.3 102.6,9.0 105.0,15.5 139.0,14.5 141.7,30.9 162.0,29.5 176.0,22.0 216.4,11.9 215.0,3.0 208.8,3.5 207.5,0.5" fill="none" stroke="#e8e4da" stroke-width="1.2" opacity=".92" stroke-linejoin="round"/><polyline points="182.0,0.5 187.0,5.5 208.8,3.5" fill="none" stroke="#e8e4da" stroke-width="1.1" opacity=".9"/><polygon points="120.0,129.5 120.0,139.0 131.6,152.3 141.0,156.1 143.0,162.8 165.0,162.2 167.8,186.7 182.0,201.0 202.0,196.2 210.6,190.5 205.0,175.2 213.5,168.5 221.0,159.9 253.0,160.9 255.4,135.1 278.3,136.1 279.3,134.2 268.8,133.2 267.0,119.5 259.0,105.3 270.7,100.5 272.6,89.1 286.0,87.2 285.0,77.5 275.5,73.8 268.8,60.5 263.0,54.5 240.0,66.2 220.0,69.5 202.0,72.9 180.0,85.5 160.0,93.5 142.0,99.5 128.0,109.5 120.0,119.5" fill="#4a46b8" fill-opacity=".05" stroke="#3a3ed2" stroke-width="1.250" stroke-linejoin="round"/>
<g fill="#f43a24" fill-opacity=".86"><circle cx="139.5" cy="115.2" r="2.4"/><circle cx="142.7" cy="106.9" r="2.2"/><circle cx="139.7" cy="113.2" r="1.5"/><circle cx="155.1" cy="106.0" r="1.8"/><circle cx="172.7" cy="105.9" r="2.2"/><circle cx="150.7" cy="108.9" r="1.3"/><circle cx="146.2" cy="106.3" r="1.5"/><circle cx="155.8" cy="111.0" r="2.4"/><circle cx="150.8" cy="103.3" r="2.3"/><circle cx="157.1" cy="101.6" r="1.6"/><circle cx="160.0" cy="105.8" r="2.0"/><circle cx="148.4" cy="109.4" r="1.6"/><circle cx="160.9" cy="108.9" r="1.8"/><circle cx="162.5" cy="110.9" r="1.4"/><circle cx="159.7" cy="113.0" r="2.0"/><circle cx="152.9" cy="111.7" r="2.2"/><circle cx="154.0" cy="105.9" r="1.4"/><circle cx="145.2" cy="109.3" r="1.5"/><circle cx="162.7" cy="116.0" r="1.7"/><circle cx="142.7" cy="106.2" r="1.9"/><circle cx="166.0" cy="105.8" r="1.9"/><circle cx="177.8" cy="108.6" r="1.8"/><circle cx="162.9" cy="128.9" r="2.0"/><circle cx="149.4" cy="122.3" r="2.5"/><circle cx="178.5" cy="119.4" r="2.3"/><circle cx="150.4" cy="119.2" r="1.3"/><circle cx="162.0" cy="119.4" r="1.7"/><circle cx="164.8" cy="107.5" r="2.3"/><circle cx="150.1" cy="115.9" r="1.3"/><circle cx="155.5" cy="118.0" r="2.3"/><circle cx="170.6" cy="100.9" r="2.2"/><circle cx="169.2" cy="113.3" r="1.5"/><circle cx="163.8" cy="111.7" r="2.4"/><circle cx="154.6" cy="116.4" r="1.5"/><circle cx="167.1" cy="113.1" r="1.8"/><circle cx="178.3" cy="114.4" r="2.5"/><circle cx="161.4" cy="122.2" r="2.4"/><circle cx="166.1" cy="113.4" r="1.8"/><circle cx="161.1" cy="109.8" r="1.5"/><circle cx="173.7" cy="117.5" r="1.6"/><circle cx="175.2" cy="116.9" r="2.0"/><circle cx="168.9" cy="115.0" r="2.2"/><circle cx="159.1" cy="123.6" r="2.3"/><circle cx="153.3" cy="112.9" r="2.1"/><circle cx="159.7" cy="104.2" r="2.2"/><circle cx="167.4" cy="116.2" r="2.4"/><circle cx="169.3" cy="118.8" r="1.8"/><circle cx="167.6" cy="119.6" r="2.4"/><circle cx="173.5" cy="103.6" r="2.4"/><circle cx="146.8" cy="103.7" r="1.9"/><circle cx="189.4" cy="124.8" r="2.1"/><circle cx="180.2" cy="123.8" r="1.2"/><circle cx="163.6" cy="122.8" r="1.7"/><circle cx="188.2" cy="120.9" r="1.7"/><circle cx="182.3" cy="129.0" r="2.3"/><circle cx="195.7" cy="120.6" r="2.3"/><circle cx="187.5" cy="112.0" r="1.5"/><circle cx="183.9" cy="114.7" r="2.3"/><circle cx="180.4" cy="112.0" r="2.2"/><circle cx="177.3" cy="117.3" r="1.5"/><circle cx="165.0" cy="119.5" r="1.3"/><circle cx="191.9" cy="114.3" r="1.2"/><circle cx="182.7" cy="115.5" r="1.3"/><circle cx="181.2" cy="134.4" r="2.0"/><circle cx="179.0" cy="108.4" r="1.9"/><circle cx="182.7" cy="126.5" r="2.3"/><circle cx="174.9" cy="110.6" r="1.4"/><circle cx="177.5" cy="116.7" r="2.0"/><circle cx="185.6" cy="115.6" r="1.4"/><circle cx="175.4" cy="116.1" r="1.9"/><circle cx="188.4" cy="110.1" r="1.9"/><circle cx="188.1" cy="115.6" r="2.2"/><circle cx="193.6" cy="120.3" r="1.9"/><circle cx="183.3" cy="128.4" r="2.0"/><circle cx="202.8" cy="110.7" r="1.9"/><circle cx="185.2" cy="130.1" r="2.4"/><circle cx="195.1" cy="119.4" r="1.9"/><circle cx="207.1" cy="116.3" r="2.2"/><circle cx="204.6" cy="109.8" r="1.3"/><circle cx="191.7" cy="126.0" r="1.7"/><circle cx="131.8" cy="142.0" r="2.0"/><circle cx="126.6" cy="143.0" r="1.3"/><circle cx="125.9" cy="138.9" r="1.8"/><circle cx="124.9" cy="139.5" r="1.3"/><circle cx="129.1" cy="139.5" r="1.5"/><circle cx="120.0" cy="140.0" r="1.4"/><circle cx="137.3" cy="143.2" r="1.2"/><circle cx="119.8" cy="139.5" r="2.4"/><circle cx="131.0" cy="141.7" r="1.4"/><circle cx="126.3" cy="138.5" r="1.7"/><circle cx="126.1" cy="142.6" r="2.5"/><circle cx="125.7" cy="143.0" r="1.5"/><circle cx="130.6" cy="149.4" r="1.3"/><circle cx="129.5" cy="142.6" r="1.6"/><circle cx="148.4" cy="127.8" r="1.8"/><circle cx="149.9" cy="133.8" r="1.4"/><circle cx="140.3" cy="126.0" r="2.2"/><circle cx="164.0" cy="123.3" r="1.7"/><circle cx="142.3" cy="131.2" r="2.2"/><circle cx="154.6" cy="128.6" r="2.0"/><circle cx="138.6" cy="136.6" r="2.0"/><circle cx="126.4" cy="127.0" r="1.5"/><circle cx="154.6" cy="136.3" r="1.3"/><circle cx="130.2" cy="128.4" r="1.6"/><circle cx="227.8" cy="148.3" r="2.0"/><circle cx="237.4" cy="145.9" r="1.9"/><circle cx="222.8" cy="145.8" r="1.7"/><circle cx="217.5" cy="143.1" r="1.5"/><circle cx="223.4" cy="144.3" r="2.1"/><circle cx="215.4" cy="143.5" r="2.4"/><circle cx="216.1" cy="147.0" r="2.4"/><circle cx="229.2" cy="148.3" r="1.8"/><circle cx="218.7" cy="138.8" r="1.8"/><circle cx="215.1" cy="143.9" r="1.2"/><circle cx="231.7" cy="143.3" r="2.4"/><circle cx="228.1" cy="137.0" r="2.4"/><circle cx="218.8" cy="146.3" r="2.5"/><circle cx="235.4" cy="138.3" r="1.7"/><circle cx="225.5" cy="152.3" r="2.3"/><circle cx="221.1" cy="145.6" r="1.7"/><circle cx="228.0" cy="146.2" r="1.3"/><circle cx="227.7" cy="142.3" r="1.4"/><circle cx="233.9" cy="136.8" r="1.3"/><circle cx="204.8" cy="137.1" r="2.4"/><circle cx="228.1" cy="143.5" r="2.3"/><circle cx="232.8" cy="140.6" r="2.2"/><circle cx="224.6" cy="152.6" r="1.9"/><circle cx="219.9" cy="156.0" r="2.1"/><circle cx="220.7" cy="152.7" r="2.4"/><circle cx="216.8" cy="149.9" r="2.4"/><circle cx="221.2" cy="149.7" r="1.7"/><circle cx="224.2" cy="152.2" r="1.9"/><circle cx="219.8" cy="150.2" r="1.3"/><circle cx="221.9" cy="150.9" r="2.1"/><circle cx="243.3" cy="131.5" r="2.5"/><circle cx="245.0" cy="132.2" r="2.0"/><circle cx="236.8" cy="129.1" r="2.4"/><circle cx="247.6" cy="129.7" r="1.8"/><circle cx="244.5" cy="133.4" r="2.4"/><circle cx="247.9" cy="131.3" r="2.4"/><circle cx="245.1" cy="129.9" r="1.2"/><circle cx="243.3" cy="134.2" r="1.6"/><circle cx="261.2" cy="65.4" r="2.0"/><circle cx="267.3" cy="63.0" r="1.7"/><circle cx="252.2" cy="70.3" r="2.1"/><circle cx="259.0" cy="66.0" r="1.8"/><circle cx="263.7" cy="65.8" r="2.3"/><circle cx="265.3" cy="66.9" r="1.2"/><circle cx="258.5" cy="61.1" r="2.3"/><circle cx="262.9" cy="58.0" r="2.3"/><circle cx="266.9" cy="60.4" r="1.5"/><circle cx="263.8" cy="68.9" r="1.3"/><circle cx="269.0" cy="97.7" r="2.5"/><circle cx="262.6" cy="100.3" r="1.3"/><circle cx="265.7" cy="100.2" r="1.8"/><circle cx="255.4" cy="95.5" r="1.5"/><circle cx="262.8" cy="99.5" r="2.4"/><circle cx="251.6" cy="96.3" r="1.5"/><circle cx="267.1" cy="97.1" r="2.4"/><circle cx="260.4" cy="99.3" r="2.2"/><circle cx="267.1" cy="115.7" r="1.5"/><circle cx="256.5" cy="112.9" r="1.8"/><circle cx="244.6" cy="111.3" r="1.8"/><circle cx="252.6" cy="106.5" r="1.9"/><circle cx="246.6" cy="109.0" r="1.3"/><circle cx="251.8" cy="106.3" r="2.0"/><circle cx="251.3" cy="109.3" r="1.4"/><circle cx="245.9" cy="108.9" r="2.4"/><circle cx="233.2" cy="95.7" r="2.1"/><circle cx="225.9" cy="90.5" r="1.8"/><circle cx="229.5" cy="82.7" r="1.8"/><circle cx="230.9" cy="86.6" r="2.4"/><circle cx="238.1" cy="79.5" r="1.6"/><circle cx="237.0" cy="79.4" r="2.0"/><circle cx="218.0" cy="84.6" r="2.1"/><circle cx="214.8" cy="73.5" r="2.1"/><circle cx="217.5" cy="105.1" r="1.8"/><circle cx="243.0" cy="94.4" r="1.2"/><circle cx="222.5" cy="86.6" r="2.1"/><circle cx="212.2" cy="80.0" r="2.1"/><circle cx="220.6" cy="76.2" r="1.5"/><circle cx="217.7" cy="93.3" r="2.5"/><circle cx="221.7" cy="81.0" r="1.3"/><circle cx="225.9" cy="65.9" r="2.5"/><circle cx="227.9" cy="76.3" r="1.4"/><circle cx="217.4" cy="80.2" r="1.3"/><circle cx="218.5" cy="106.9" r="1.8"/><circle cx="201.8" cy="94.5" r="1.8"/><circle cx="211.5" cy="104.8" r="1.9"/><circle cx="211.5" cy="100.0" r="1.4"/><circle cx="204.6" cy="110.5" r="1.9"/><circle cx="189.9" cy="108.5" r="2.4"/><circle cx="206.2" cy="108.8" r="1.8"/><circle cx="190.8" cy="111.5" r="2.2"/><circle cx="213.5" cy="102.4" r="1.8"/><circle cx="217.5" cy="97.6" r="2.0"/><circle cx="191.5" cy="155.7" r="1.8"/><circle cx="190.3" cy="154.5" r="1.9"/><circle cx="186.4" cy="150.9" r="2.4"/><circle cx="173.9" cy="175.9" r="1.3"/><circle cx="174.0" cy="175.3" r="2.2"/><circle cx="185.5" cy="173.3" r="2.2"/><circle cx="183.9" cy="173.4" r="1.5"/><circle cx="237.9" cy="122.6" r="2.3"/><circle cx="229.0" cy="115.5" r="1.3"/><circle cx="243.8" cy="122.4" r="1.5"/><circle cx="254.6" cy="118.7" r="1.7"/><circle cx="247.4" cy="110.2" r="1.7"/><circle cx="247.0" cy="126.5" r="1.7"/><circle cx="249.3" cy="117.8" r="2.3"/><circle cx="249.7" cy="114.6" r="1.8"/><circle cx="223.9" cy="135.7" r="1.4"/><circle cx="204.6" cy="142.7" r="2.2"/><circle cx="218.3" cy="134.0" r="1.9"/><circle cx="202.1" cy="139.7" r="2.1"/><circle cx="211.9" cy="133.4" r="1.4"/><circle cx="204.7" cy="136.9" r="1.4"/><circle cx="213.0" cy="143.7" r="2.1"/><circle cx="198.4" cy="142.8" r="1.6"/><circle cx="170.1" cy="104.1" r="1.4"/><circle cx="169.5" cy="100.5" r="2.3"/><circle cx="180.9" cy="101.4" r="2.3"/><circle cx="181.4" cy="111.2" r="1.8"/><circle cx="183.4" cy="97.5" r="2.0"/><circle cx="164.8" cy="104.7" r="1.7"/></g>
<text x="334" y="15.5" font-family="Liberation Sans" font-size="4.300" fill="#f8f8f8" stroke="#1c1c1c" stroke-width="0.300" paint-order="stroke">Beryslavskyi</text><text x="348" y="21.5" font-family="Liberation Sans" font-size="4.300" fill="#f8f8f8" stroke="#1c1c1c" stroke-width="0.300" paint-order="stroke">raion</text><text x="337" y="59.5" font-family="Liberation Sans" font-size="4.300" fill="#f8f8f8" stroke="#1c1c1c" stroke-width="0.300" paint-order="stroke">Nova Kakhovka</text><text x="346" y="98.5" font-family="Liberation Sans" font-size="4.300" fill="#f8f8f8" stroke="#1c1c1c" stroke-width="0.300" paint-order="stroke">Chornianka</text><text x="300" y="125.5" font-family="Liberation Sans" font-size="4.300" fill="#f8f8f8" stroke="#1c1c1c" stroke-width="0.300" paint-order="stroke">Nova Maiachka</text><text x="116" y="108.5" font-family="Liberation Sans" font-size="4.300" fill="#f8f8f8" stroke="#1c1c1c" stroke-width="0.300" paint-order="stroke">Kherson</text><text x="66" y="106.5" font-family="Liberation Sans" font-size="4.300" fill="#f8f8f8" stroke="#1c1c1c" stroke-width="0.300" paint-order="stroke">Bilozerskyi</text><text x="66" y="112.5" font-family="Liberation Sans" font-size="4.300" fill="#f8f8f8" stroke="#1c1c1c" stroke-width="0.300" paint-order="stroke">raion</text><text x="152" y="122.5" font-family="Liberation Sans" font-size="4.300" fill="#f8f8f8" stroke="#1c1c1c" stroke-width="0.300" paint-order="stroke">Tsiurupynskyi</text><text x="152" y="128.5" font-family="Liberation Sans" font-size="4.300" fill="#f8f8f8" stroke="#1c1c1c" stroke-width="0.300" paint-order="stroke">raion</text><text x="235" y="73.5" font-family="Liberation Sans" font-size="4.300" fill="#f8f8f8" stroke="#1c1c1c" stroke-width="0.300" paint-order="stroke">Kozatski</text><text x="235" y="79.5" font-family="Liberation Sans" font-size="4.300" fill="#f8f8f8" stroke="#1c1c1c" stroke-width="0.300" paint-order="stroke">Laheri</text><text x="218" y="165.5" font-family="Liberation Sans" font-size="4.300" fill="#f8f8f8" stroke="#1c1c1c" stroke-width="0.300" paint-order="stroke">Velyki Kopani</text><text x="80" y="152.5" font-family="Liberation Sans" font-size="4.300" fill="#f8f8f8" stroke="#1c1c1c" stroke-width="0.300" paint-order="stroke">Holoprystanskyi</text><text x="92" y="158.5" font-family="Liberation Sans" font-size="4.300" fill="#f8f8f8" stroke="#1c1c1c" stroke-width="0.300" paint-order="stroke">raion</text><text x="214" y="226.5" font-family="Liberation Sans" font-size="4.300" fill="#f8f8f8" stroke="#1c1c1c" stroke-width="0.300" paint-order="stroke">Vynohradove</text><text x="36" y="235.5" font-family="Liberation Sans" font-size="4.300" fill="#f8f8f8" stroke="#1c1c1c" stroke-width="0.300" paint-order="stroke">Skadovsk</text><text x="388" y="222.5" font-family="Liberation Sans" font-size="4.300" fill="#f8f8f8" stroke="#1c1c1c" stroke-width="0.300" paint-order="stroke">Chaplynskyi</text><text x="388" y="228.5" font-family="Liberation Sans" font-size="4.300" fill="#f8f8f8" stroke="#1c1c1c" stroke-width="0.300" paint-order="stroke">raion</text><text x="394" y="37.5" font-family="Liberation Sans" font-size="4.300" fill="#f8f8f8" stroke="#1c1c1c" stroke-width="0.300" paint-order="stroke">Kakho</text><text x="390" y="23.5" font-family="Liberation Sans" font-size="3.400" fill="#3aa0ff" text-anchor="middle">Kakhovske</text><text x="390" y="28.0" font-family="Liberation Sans" font-size="3.400" fill="#3aa0ff" text-anchor="middle">Vodoskhovyshche</text><circle cx="21" cy="112.5" r="1.900" fill="#fff"/><g><rect x="5" y="4" width="12.500" height="25" rx="1.500" fill="#fff"/><path d="M5 16.500H17.500" stroke="#ccc" stroke-width="0.500"/><path d="M8.400 10.200H14M11.200 7.400V13M8.400 22.800H14" stroke="#333" stroke-width="0.900"/><rect x="5" y="33.500" width="12.500" height="25" rx="1.500" fill="#fff"/><path d="M5 46H17.500" stroke="#ccc" stroke-width="0.500"/><path d="M11.200 37.500L13.800 39.500L12.800 42.500H9.600L8.600 39.500Z" fill="#333"/><rect x="8.800" y="49.500" width="4.800" height="4.800" fill="#333"/><rect x="5" y="64.500" width="12.500" height="24.500" rx="1.500" fill="#fff"/><path d="M5 76.700H17.500" stroke="#ccc" stroke-width="0.500"/><rect x="8.800" y="68.500" width="4.600" height="4.600" rx="0.800" fill="none" stroke="#333" stroke-width="0.800"/><path d="M11.200 71L14.200 68" stroke="#333" stroke-width="0.900"/><path d="M9 80.700H13.400M9.500 81.700H12.900V85.500H9.500Z" stroke="#333" stroke-width="0.800" fill="#333"/><rect x="381" y="4.500" width="18" height="18.500" rx="2" fill="#fff"/><path d="M390 8.500L396 11.500L390 14.500L384 11.500Z" fill="#c4c4c4"/><path d="M384 13L390 16L396 13V15.500L390 18.500L384 15.500Z" fill="#d8d8d8"/></g><rect x="92" y="250.500" width="312" height="6.500" fill="#fff" fill-opacity=".74"/><text x="94.500" y="255.600" font-family="Liberation Sans" font-size="4.250" fill="#333" textLength="306" lengthAdjust="spacingAndGlyphs"><tspan fill="#0078a8">Leaflet</tspan> | Powered by <tspan fill="#0078a8">Esri</tspan> | DigitalGlobe, GeoEye, i-cubed, USDA, USGS, AEX, Getmapping, Aerogrid, IGN, IGP, swisstopo, and the GIS User Community</text></g></svg>
  </div>
</div>

<!-- ============ PANEL ============ -->
<div id="panel">
  <div id="ptitle" class="abs" style="left:12.500px;top:15.200px;font-size:16.500px;font-weight:bold;color:#f6f6f6;white-space:nowrap;line-height:20px">Участники (108)</div>
  <svg class="abs" style="left:370px;top:18px" width="14" height="14" viewBox="0 0 14 14"><path d="M1.200 1.200L12.800 12.800M12.800 1.200L1.200 12.800" stroke="#f2f2f2" stroke-width="1.300"/></svg>
  <div class="abs" style="left:11px;top:57px;width:260px;height:28px;border-radius:7px;background:#000;border:1px solid #8c8c8c"></div>
  <svg class="abs" style="left:18px;top:63px" width="16" height="16" viewBox="0 0 16 16" fill="none" stroke="#f0f0f0" stroke-width="1.200"><circle cx="7" cy="7" r="5"/><path d="M10.600 10.600L14.600 14.600"/></svg>
  <div class="abs" style="left:42px;top:61px;font-size:15.500px;color:#8d8d8d;white-space:nowrap;line-height:20px">Поиск</div>
  <div class="abs" style="left:317px;top:57px;width:75px;height:28px;border-radius:14px;border:1px solid #6a6a6a"></div>
  <div id="otm" class="abs" style="left:328.300px;top:61px;font-size:15px;color:#f4f4f4;white-space:nowrap;line-height:20px;-webkit-text-stroke:0.35px #f4f4f4">Отмена</div>
  <svg class="abs" style="left:28px;top:121px" width="14" height="10" viewBox="0 0 14 10"><path d="M2 2.200L7 7.400L12 2.200" fill="none" stroke="#e8e8e8" stroke-width="1.400"/></svg>
  <div id="sech" class="abs" style="left:50px;top:116px;font-size:14.500px;color:#cfcfcf;-webkit-text-stroke:0.65px #cfcfcf;white-space:nowrap;line-height:20px">На совещании (108)</div>
  <svg class="abs" style="left:335px;top:117px" width="18" height="18" viewBox="0 0 18 18" fill="none" stroke="#e3a53a" stroke-width="1.400" stroke-linecap="round" stroke-linejoin="round"><circle cx="7.600" cy="4.800" r="3"/><path d="M8.600 15.400H4.200C2.200 15.400 2 13.600 2.600 12.400C3.500 10.400 5.300 9.400 7.600 9.400C8.600 9.400 9.400 9.600 10.200 9.900"/><path d="M13.200 10.400L16.600 16H9.800Z"/><path d="M13.200 12.600V14" stroke-width="1"/></svg>
  <div class="abs" style="left:373.500px;top:101.500px;width:16.300px;height:371.500px;background:linear-gradient(180deg,#484848,#3e3e3e)"></div>
  <div class="abs" style="left:374px;top:118px;width:15.300px;height:20.600px;background:#5b5b5b"></div>
  <svg class="abs" style="left:377px;top:108px" width="9" height="6" viewBox="0 0 9 6"><path d="M0.500 5L4.500 1L8.500 5Z" fill="#666"/></svg>
  <svg class="abs" style="left:377px;top:460px" width="9" height="6" viewBox="0 0 9 6"><path d="M0.500 1L4.500 5L8.500 1Z" fill="#666"/></svg>
  <div class="abs" style="left:0;top:0;width:372px;height:473px;overflow:hidden">
  <div class="row" style="top:150.7px"><div class="av"><svg class="abs" style="left:7px;top:6px" width="20" height="20" viewBox="0 0 20 20" fill="none" stroke="#f4e6d6" stroke-width="1.200" stroke-linecap="round"><circle cx="9.400" cy="5.600" r="3.300"/><path d="M12 17.200H5C2.800 17.200 2.600 15.200 3.200 13.800C4.200 11.400 6.400 10.400 9.400 10.400C10.800 10.400 12 10.700 13 11.300"/><text x="15.400" y="18" font-family="Liberation Sans" font-weight="bold" font-size="6.500" fill="#f4e6d6" stroke="none" text-anchor="middle">?</text></svg></div><div class="n1" id="rn0">Приазовський НПП ...</div><div class="n2" style="color:#bdbdbd;-webkit-text-stroke:0.2px #bdbdbd">Я</div><div class="abs" style="left:95px;top:32.500px;width:4px;height:4px;border-radius:2px;background:#8a8a8a"></div><svg class="abs" style="left:104.800px;top:27.500px" width="14" height="14" viewBox="0 0 14 14"><circle cx="7" cy="7" r="6.200" fill="none" stroke="#e09a33" stroke-width="1.100"/><text x="7" y="10.200" font-family="Liberation Sans" font-size="9" fill="#e09a33" text-anchor="middle">?</text></svg><div class="n2 nvt" style="left:120px">Не подтверждено</div><div class="dots"><i style="left:1px"></i><i style="left:5px"></i><i style="left:9px"></i></div><svg class="abs" style="left:329.800px;top:17.500px" width="13.600" height="15.300" viewBox="0 0 16 18" fill="none" stroke="#e0506e" stroke-width="1.25" stroke-linecap="round"><rect x="5.200" y="1.600" width="5.600" height="9.400" rx="2.800"/><path d="M3 9A5 5 0 0 0 13 9M8 14V16.200M4.400 16.400H11.600M1.600 1.400L14.200 16.400"/></svg></div>
  <div class="row" style="top:200.7px"><div class="av" style="background:#5c5c5c;color:#fff;font-size:12.500px;font-weight:bold;text-align:center;line-height:32px">LI</div><div class="n1" style="top:15px">Lystopad Iryna</div><div class="dots"><i style="left:1px"></i><i style="left:5px"></i><i style="left:9px"></i></div><svg class="abs" style="left:329.800px;top:17.500px" width="13.600" height="15.300" viewBox="0 0 16 18" fill="none" stroke="#e0506e" stroke-width="1.25" stroke-linecap="round"><rect x="5.200" y="1.600" width="5.600" height="9.400" rx="2.800"/><path d="M3 9A5 5 0 0 0 13 9M8 14V16.200M4.400 16.400H11.600M1.600 1.400L14.200 16.400"/></svg></div>
  <div class="row" style="top:250.7px"><div class="av" style="background:#5c5c5c;color:#fff;font-size:12.500px;font-weight:bold;text-align:center;line-height:32px">VO</div><div class="abs" style="left:47px;top:29px;width:17px;height:14px;border-radius:4px;background:#111"></div><div class="abs" style="left:49px;top:31px;width:13px;height:10px;border-radius:2.500px;background:#f0637b"></div><svg class="abs" style="left:52px;top:32.500px" width="7" height="7" viewBox="0 0 7 7"><path d="M3.500 6V1.600M1.600 3.200L3.500 1.300L5.400 3.200" fill="none" stroke="#3a1018" stroke-width="1.100"/></svg><div class="n1" id="rn2">Vasyliuk Oleksiy</div><div class="n2" style="color:#b9b9b9;-webkit-text-stroke:0.25px #b9b9b9">Докладчик</div><div class="dots"><i style="left:1px"></i><i style="left:5px"></i><i style="left:9px"></i></div></div>
  <div class="row" style="top:300.7px"><div class="av" style="background:#f4f8f4"><svg class="abs" style="left:0;top:0" width="32" height="32" viewBox="0 0 32 32"><circle cx="16" cy="16" r="14.700" fill="none" stroke="#3fa45a" stroke-width="0.900"/><path d="M24 3.500C27 5 29 8 29.500 11C27 10 25 7.500 24 3.500Z" fill="#3fa45a"/><g fill="none" stroke="#3f9a58" stroke-width="1.300" stroke-linecap="round"><path d="M16 7V25.500"/><path d="M10.500 9.500V19.500C10.500 21.500 13 21.500 13.800 20C14.400 22 15.200 23.500 16 25.500"/><path d="M21.500 9.500V19.500C21.500 21.500 19 21.500 18.200 20C17.600 22 16.800 23.500 16 25.500"/><path d="M10.500 10C12.500 12 13.500 15 13.300 18"/><path d="M21.500 10C19.500 12 18.500 15 18.700 18"/><path d="M12.500 22H19.500"/></g></svg></div><div class="n1" id="rn3">Міндовкілля</div><div class="n2" style="color:#b9b9b9;-webkit-text-stroke:0.25px #b9b9b9">Организатор</div><div class="dots"><i style="left:1px"></i><i style="left:5px"></i><i style="left:9px"></i></div><svg class="abs" style="left:329.800px;top:17.500px" width="13.600" height="15.300" viewBox="0 0 16 18" fill="none" stroke="#e0506e" stroke-width="1.25" stroke-linecap="round"><rect x="5.200" y="1.600" width="5.600" height="9.400" rx="2.800"/><path d="M3 9A5 5 0 0 0 13 9M8 14V16.200M4.400 16.400H11.600M1.600 1.400L14.200 16.400"/></svg></div>
  <div class="row" style="top:350.7px"><div class="av"><svg class="abs" style="left:7px;top:6px" width="20" height="20" viewBox="0 0 20 20" fill="none" stroke="#f4e6d6" stroke-width="1.200" stroke-linecap="round"><circle cx="9.400" cy="5.600" r="3.300"/><path d="M12 17.200H5C2.800 17.200 2.600 15.200 3.200 13.800C4.200 11.400 6.400 10.400 9.400 10.400C10.800 10.400 12 10.700 13 11.300"/><text x="15.400" y="18" font-family="Liberation Sans" font-weight="bold" font-size="6.500" fill="#f4e6d6" stroke="none" text-anchor="middle">?</text></svg></div><div class="n1" id="rn4">Alina</div><svg class="abs" style="left:74.500px;top:27.500px" width="14" height="14" viewBox="0 0 14 14"><circle cx="7" cy="7" r="6.200" fill="none" stroke="#e09a33" stroke-width="1.100"/><text x="7" y="10.200" font-family="Liberation Sans" font-size="9" fill="#e09a33" text-anchor="middle">?</text></svg><div class="n2 nvt" style="left:94.500px">Не подтверждено</div><div class="dots"><i style="left:1px"></i><i style="left:5px"></i><i style="left:9px"></i></div><svg class="abs" style="left:329.800px;top:17.500px" width="13.600" height="15.300" viewBox="0 0 16 18" fill="none" stroke="#e0506e" stroke-width="1.25" stroke-linecap="round"><rect x="5.200" y="1.600" width="5.600" height="9.400" rx="2.800"/><path d="M3 9A5 5 0 0 0 13 9M8 14V16.200M4.400 16.400H11.600M1.600 1.400L14.200 16.400"/></svg></div>
  <div class="row" style="top:400.7px"><div class="av"><svg class="abs" style="left:7px;top:6px" width="20" height="20" viewBox="0 0 20 20" fill="none" stroke="#f4e6d6" stroke-width="1.200" stroke-linecap="round"><circle cx="9.400" cy="5.600" r="3.300"/><path d="M12 17.200H5C2.800 17.200 2.600 15.200 3.200 13.800C4.200 11.400 6.400 10.400 9.400 10.400C10.800 10.400 12 10.700 13 11.300"/><text x="15.400" y="18" font-family="Liberation Sans" font-weight="bold" font-size="6.500" fill="#f4e6d6" stroke="none" text-anchor="middle">?</text></svg></div><div class="n1" id="rn5">Anastasiia</div><svg class="abs" style="left:74.500px;top:27.500px" width="14" height="14" viewBox="0 0 14 14"><circle cx="7" cy="7" r="6.200" fill="none" stroke="#e09a33" stroke-width="1.100"/><text x="7" y="10.200" font-family="Liberation Sans" font-size="9" fill="#e09a33" text-anchor="middle">?</text></svg><div class="n2 nvt" style="left:94.500px">Не подтверждено</div><div class="dots"><i style="left:1px"></i><i style="left:5px"></i><i style="left:9px"></i></div><svg class="abs" style="left:329.800px;top:17.500px" width="13.600" height="15.300" viewBox="0 0 16 18" fill="none" stroke="#e0506e" stroke-width="1.25" stroke-linecap="round"><rect x="5.200" y="1.600" width="5.600" height="9.400" rx="2.800"/><path d="M3 9A5 5 0 0 0 13 9M8 14V16.200M4.400 16.400H11.600M1.600 1.400L14.200 16.400"/></svg></div>
  <div class="row" style="top:450.7px"><div class="av"><svg class="abs" style="left:7px;top:6px" width="20" height="20" viewBox="0 0 20 20" fill="none" stroke="#f4e6d6" stroke-width="1.200" stroke-linecap="round"><circle cx="9.400" cy="5.600" r="3.300"/><path d="M12 17.200H5C2.800 17.200 2.600 15.200 3.200 13.800C4.200 11.400 6.400 10.400 9.400 10.400C10.800 10.400 12 10.700 13 11.300"/><text x="15.400" y="18" font-family="Liberation Sans" font-weight="bold" font-size="6.500" fill="#f4e6d6" stroke="none" text-anchor="middle">?</text></svg></div><div class="n1" id="rn6">Anastasiia Slipchuk</div><svg class="abs" style="left:74.500px;top:27.500px" width="14" height="14" viewBox="0 0 14 14"><circle cx="7" cy="7" r="6.200" fill="none" stroke="#e09a33" stroke-width="1.100"/><text x="7" y="10.200" font-family="Liberation Sans" font-size="9" fill="#e09a33" text-anchor="middle">?</text></svg><div class="n2 nvt" style="left:94.500px">Не подтверждено</div><div class="dots"><i style="left:1px"></i><i style="left:5px"></i><i style="left:9px"></i></div><svg class="abs" style="left:329.800px;top:17.500px" width="13.600" height="15.300" viewBox="0 0 16 18" fill="none" stroke="#e0506e" stroke-width="1.25" stroke-linecap="round"><rect x="5.200" y="1.600" width="5.600" height="9.400" rx="2.800"/><path d="M3 9A5 5 0 0 0 13 9M8 14V16.200M4.400 16.400H11.600M1.600 1.400L14.200 16.400"/></svg></div>
  </div>
</div>

<!-- ============ BOTTOM BAR ============ -->
<div id="bottom">
  <!-- cc -->
  <svg class="abs" style="left:29px;top:652px" width="20" height="17" viewBox="0 0 20 17"><path d="M4 1H15.500C17 1 18 2 18 3.500V9.500C18 11 17 12 15.500 12H6.500L2.200 15.200C1.800 15.500 1.500 15.200 1.600 14.800L2.200 12C1.400 11.600 1.200 10.800 1.200 10V3.500C1.200 2 2.500 1 4 1Z" fill="none" stroke="#f2f2f2" stroke-width="1.300" stroke-linejoin="round"/><path d="M8.700 5A2.100 2.100 0 1 0 8.700 8.200M14.300 5A2.100 2.100 0 1 0 14.300 8.200" fill="none" stroke="#f2f2f2" stroke-width="1.300"/></svg>
  <svg class="abs" style="left:59px;top:656px" width="12" height="8" viewBox="0 0 12 8"><path d="M1.600 1.600L6 6L10.400 1.600" fill="none" stroke="#f0f0f0" stroke-width="1.400"/></svg>
  <!-- mic pill -->
  <div class="pill" style="left:243px;top:640px;width:228px;height:40px;border-radius:20px;border-color:#5a5a5a"></div>
  <svg class="abs" style="left:262px;top:650px" width="16" height="20" viewBox="0 0 16 20" fill="none" stroke="#e8707f" stroke-width="1.300" stroke-linecap="round"><rect x="5" y="2" width="6" height="10.400" rx="3"/><path d="M2.600 10A5.400 5.400 0 0 0 13.400 10M8 15.600V18M4.400 18.200H11.600M1.600 1.600L14.400 18"/></svg>
  <div id="bmic" class="abs" style="margin-top:1px;left:289px;top:649px;font-size:17px;color:#8a8a8a;white-space:nowrap;line-height:22px;-webkit-text-stroke:0.3px #8a8a8a">Включить микро...</div>
  <svg class="abs" style="left:447.5px;top:656px" width="12" height="8" viewBox="0 0 12 8"><path d="M1.600 1.600L6 6L10.400 1.600" fill="none" stroke="#f0f0f0" stroke-width="1.400"/></svg>
  <!-- video pill -->
  <div class="pill" style="left:479px;top:640px;width:228px;height:40px;border-radius:20px;border-color:#5a5a5a"></div>
  <svg class="abs" style="left:499px;top:652px" width="20" height="16" viewBox="0 0 20 16" fill="none" stroke="#8a8a8a" stroke-width="1.300" stroke-linejoin="round"><rect x="1" y="1.600" width="12.400" height="12.800" rx="3"/><path d="M13.400 6.400L18 3.400V12.600L13.400 9.600Z"/><circle cx="4.200" cy="4.800" r="1" fill="#39b36b" stroke="none"/></svg>
  <div id="bvid" class="abs" style="margin-top:1px;left:527px;top:649px;font-size:17px;color:#7c7c7c;white-space:nowrap;line-height:22px;-webkit-text-stroke:0.3px #7c7c7c">Остановить видео</div>
  <svg class="abs" style="left:684px;top:656px" width="12" height="8" viewBox="0 0 12 8"><path d="M1.600 1.600L6 6L10.400 1.600" fill="none" stroke="#f0f0f0" stroke-width="1.400"/></svg>
  <!-- share pill -->
  <div class="pill" style="left:715px;top:640px;width:222px;height:40px;border-radius:20px;border-color:#5a5a5a"></div>
  <svg class="abs" style="left:732px;top:652px" width="20" height="16" viewBox="0 0 20 16" fill="none" stroke="#f2f2f2" stroke-width="1.300" stroke-linejoin="round" stroke-linecap="round"><rect x="1.200" y="1.200" width="17.600" height="13.600" rx="3"/><path d="M10 11.400V5M7.200 7.600L10 4.800L12.800 7.600"/></svg>
  <div id="bshr" class="abs" style="margin-top:1px;left:760px;top:649px;font-size:17px;color:#f6f6f6;white-space:nowrap;line-height:22px;-webkit-text-stroke:0.4px #f6f6f6">Совместный доступ</div>
  <!-- reactions pill -->
  <div class="pill" style="left:945px;top:640px;width:82px;height:40px;border-radius:20px;border-color:#5a5a5a"></div>
  <svg class="abs" style="left:957px;top:650px" width="18" height="21" viewBox="0 0 18 21" fill="none" stroke="#e8e8e8" stroke-width="1.100" stroke-linecap="round" stroke-linejoin="round"><path d="M4.400 11V4.400C4.400 3 6.400 3 6.400 4.400V3C6.400 1.600 8.400 1.600 8.400 3V2.600C8.400 1.200 10.400 1.200 10.400 2.600V3.600C10.400 2.400 12.400 2.400 12.400 3.600V13.500C12.400 17 10.800 19 8.400 19C5.600 19 4.400 17.200 4.400 14Z"/><path d="M6.400 4.400V9M8.400 3V9M10.400 3.600V9"/><path d="M8.600 15.600C8.600 14 9.400 12.800 10.800 12.400" stroke-width="1"/></svg>
  <div class="abs" style="left:985.800px;top:650px;width:1px;height:20px;background:#555"></div>
  <svg class="abs" style="left:995px;top:648px" width="24" height="24" viewBox="0 0 24 24" fill="none" stroke="#e8e8e8" stroke-width="1.200" stroke-linecap="round"><path d="M19.800 10.800A8.400 8.400 0 1 1 13.200 4.200"/><circle cx="8.600" cy="10.400" r="0.700" fill="#e8e8e8"/><circle cx="14.200" cy="10.400" r="0.700" fill="#e8e8e8"/><path d="M7.400 14.200C8.600 16.400 14.400 16.400 15.600 14.200"/><path d="M18.400 2.200V7M16 4.600H20.800"/></svg>
  <!-- more -->
  <div class="pill" style="left:1035px;top:640px;width:40px;height:40px;border-radius:20px;border-color:#5a5a5a"></div>
  <div class="abs" style="left:1048px;top:659px;width:2.300px;height:2.300px;border-radius:2px;background:#f0f0f0;box-shadow:6.200px 0 0 #f0f0f0,12.400px 0 0 #f0f0f0"></div>
  <!-- leave -->
  <div class="abs" style="left:1083px;top:640px;width:40px;height:40px;border-radius:20px;background:#e2222f"></div>
  <svg class="abs" style="left:1094px;top:651px" width="18" height="18" viewBox="0 0 18 18"><path d="M1.800 1.800L16.200 16.200M16.200 1.800L1.800 16.200" stroke="#fff" stroke-width="1.300"/></svg>
  <!-- participants -->
  <div class="abs" style="left:1218px;top:640px;width:40px;height:40px;border-radius:20px;background:#464646"></div>
  <svg class="abs" style="left:1228px;top:650px" width="20" height="20" viewBox="0 0 20 20"><circle cx="9" cy="5" r="3.400" fill="#fff"/><path d="M2.600 16.800C2.600 12.600 5.400 10 9 10C10.400 10 11.600 10.400 12.600 11.100H10.600V16.800Z" fill="#fff"/><path d="M12 12.200H18M12 14.400H18M12 16.600H18" stroke="#fff" stroke-width="1.200"/></svg>
  <!-- chat -->
  <svg class="abs" style="left:1276px;top:650.300px" width="19.500" height="19.500" viewBox="0 0 22 22"><path d="M11 3.200A7.800 7.800 0 1 1 6.600 17.400L3 18.600L4.300 15.200A7.800 7.800 0 0 1 11 3.200Z" fill="none" stroke="#f2f2f2" stroke-width="1.400" stroke-linejoin="round"/></svg>
  <div class="abs" style="left:1293px;top:639.200px;width:14px;height:14px;border-radius:7px;background:#1276d3;border:2px solid #111"></div>
  <!-- folder -->
  <svg class="abs" style="left:1325px;top:651.200px" width="18" height="18" viewBox="0 0 20 20" fill="none" stroke="#f2f2f2" stroke-width="1.400" stroke-linejoin="round"><path d="M2 5.400C2 4 3 3.200 4.200 3.200H7.600L9.600 5.400H15.800C17 5.400 18 6.400 18 7.600V14.600C18 15.800 17 16.800 15.800 16.800H4.200C3 16.800 2 15.800 2 14.600Z"/><path d="M2 8.400H18"/></svg>
</div>

<!-- ============ SELF VIEW ============ -->
<div id="self" class="abs" style="left:14px;top:470px;width:256px;height:144px;border-radius:9px;background:#262626">
  <div class="abs" style="left:6px;top:5.500px;width:32px;height:32px;border-radius:16px;background:#f1f1f1"></div>
  <svg class="abs" style="left:13px;top:12.500px" width="18" height="18" viewBox="0 0 18 18" fill="none" stroke="#222" stroke-width="1.200" stroke-linejoin="round" stroke-linecap="round"><path d="M10.400 1.800L16.200 7.600L14.600 8.400L12.600 8L9.600 11L9.400 13.800L8 14.600L3.400 10L4.200 8.600L7 8.400L10 5.400L9.600 3.400Z"/><path d="M5.800 12.200L1.800 16.200"/></svg>
  <svg class="abs" style="left:113px;top:38px" width="31" height="29" viewBox="0 0 31 29" fill="none" stroke="#f4f4f4" stroke-width="1.700" stroke-linecap="round" stroke-linejoin="round"><path d="M6 5H17C19.500 5 21 6.500 21 9V20C21 22.500 19.500 24 17 24H6C3.500 24 2 22.500 2 20V9C2 6.500 3.500 5 6 5Z"/><path d="M21 12L28 8V21L21 17"/><path d="M3 2L25 27"/></svg>
  <div id="sv1" class="abs" style="left:0;width:256px;top:77px;transform:scaleX(1.055);text-align:center;font-size:15px;line-height:15px;color:#f2f2f2;-webkit-text-stroke:0.25px #f2f2f2">Не удается получить<br>доступ к камере</div>
  <div class="abs" style="left:218px;top:105.500px;width:32px;height:32px;border-radius:16px;background:#f1f1f1"></div>
  <svg class="abs" style="left:225px;top:112.500px" width="18" height="18" viewBox="0 0 18 18" fill="none" stroke="#222" stroke-width="1.200" stroke-linejoin="round"><circle cx="9" cy="9" r="2.800"/><path d="M7.600 1.600H10.400L10.900 3.700L12.300 4.500L14.300 3.800L15.700 6.200L14.200 7.700V9.300L15.700 10.800L14.300 13.200L12.300 12.500L10.900 13.300L10.400 15.400H7.600L7.100 13.300L5.700 12.500L3.700 13.200L2.300 10.800L3.800 9.300V7.700L2.300 6.200L3.700 3.800L5.700 4.500L7.100 3.700Z" transform="translate(0,0.500)"/></svg>
</div>

<!-- ============ WINDOWS WATERMARK ============ -->
<div id="wm1" class="abs" style="left:1032px;transform:scaleX(1.065);transform-origin:0 50%;top:596px;font-size:18.500px;line-height:22px;color:rgba(200,200,200,.56);white-space:nowrap">Активація Windows</div>
<div id="wm2" class="abs" style="left:1032px;transform:scaleX(1.04);transform-origin:0 50%;top:620.400px;font-size:14.500px;line-height:19.700px;color:rgba(200,200,200,.56);white-space:nowrap">Перейдіть до розділу "Настройки", щоб<br>активувати Windows.</div>


</div>
</body>
</html>
